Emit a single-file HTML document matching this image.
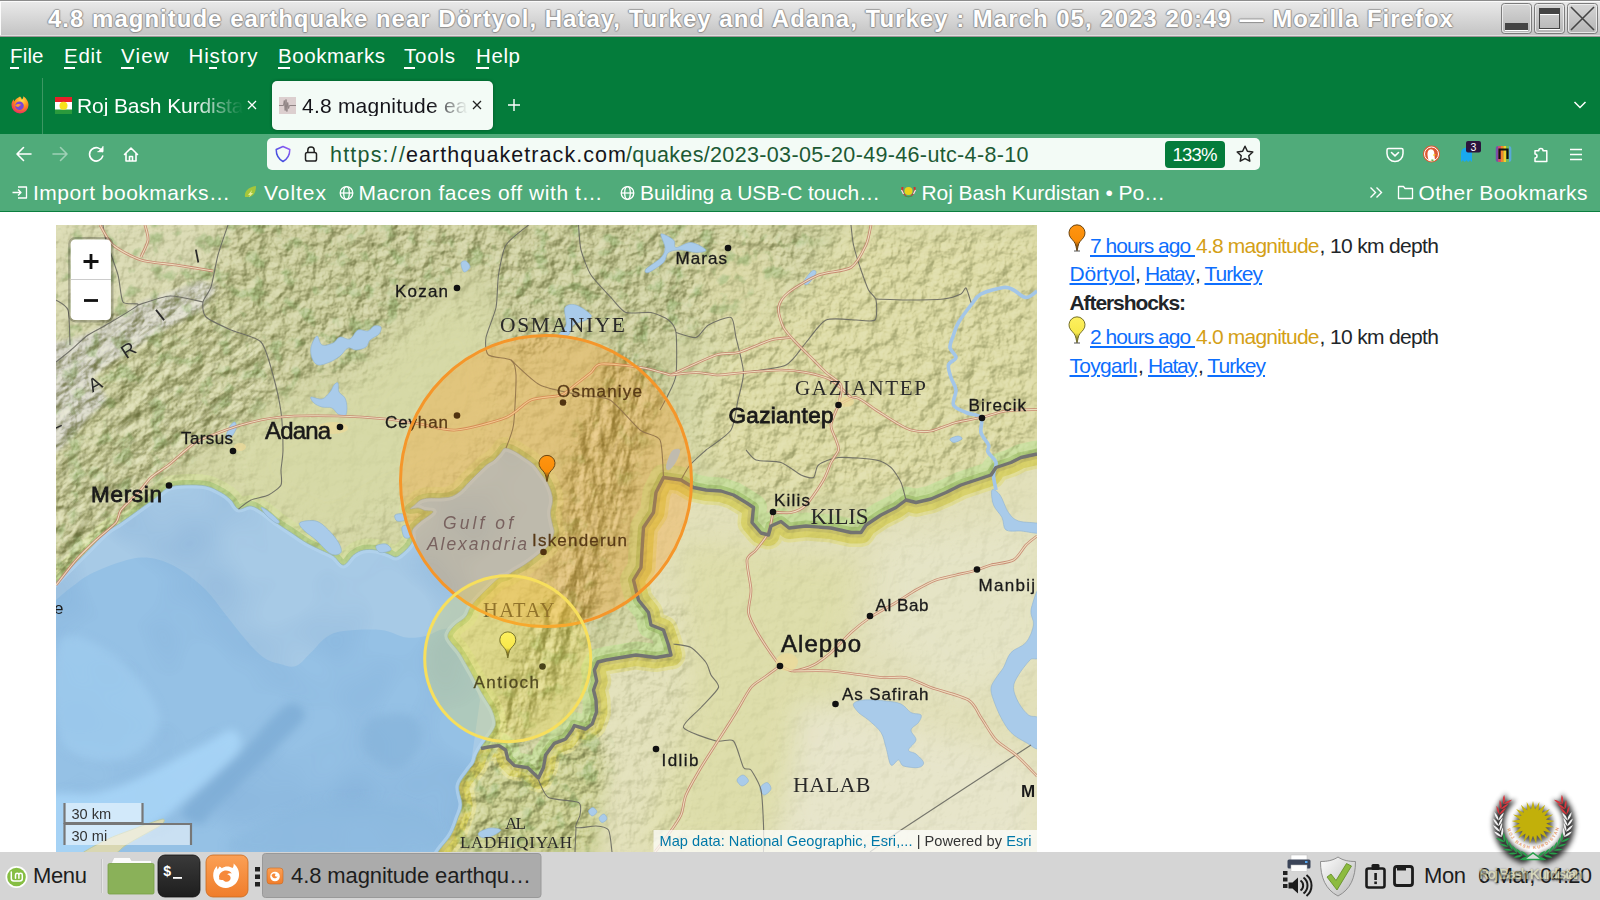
<!DOCTYPE html>
<html lang="en">
<head>
<meta charset="utf-8">
<title>4.8 magnitude earthquake near Dörtyol, Hatay, Turkey and Adana, Turkey : March 05, 2023 20:49 — Mozilla Firefox</title>
<style>
html,body{margin:0;padding:0;width:1600px;height:900px;overflow:hidden;background:#fff;font-family:"Liberation Sans",sans-serif;}
#root{position:absolute;left:0;top:0;width:1600px;height:900px;overflow:hidden;background:#fff;}
.a{position:absolute;}
.t{position:absolute;white-space:pre;line-height:1;}
a{color:inherit;}
</style>
</head>
<body>
<div id="root">
<!-- ===== window title bar ===== -->
<div class="a" style="left:0;top:0;width:1600px;height:37px;background:linear-gradient(#e9e9e9 2px,#c4c4c4 35px);"></div>
<div class="a" style="left:0;top:0;width:1600px;height:1px;background:#8c8c8c;"></div>
<div class="a" style="left:0;top:1px;width:1600px;height:1px;background:#fbfbfb;"></div>
<div class="a" style="left:0;top:1px;width:1px;height:35px;background:#fbfbfb;"></div>
<div class="a" style="left:0;top:35px;width:1600px;height:1px;background:#dedede;"></div>
<div class="a" style="left:0;top:36px;width:1600px;height:1px;background:#9c9696;"></div>
<svg class="a" style="left:1496px;top:0" width="104" height="37" viewBox="1496 0 104 37">
  <defs><linearGradient id="wb" x1="0" y1="0" x2="0" y2="1"><stop offset="0" stop-color="#d6d6d6"/><stop offset="1" stop-color="#b4b4b4"/></linearGradient></defs>
  <g fill="url(#wb)" stroke="#7c7c7c" stroke-width="1">
    <rect x="1501.5" y="3.5" width="30" height="30" rx="3"/>
    <rect x="1534.5" y="3.5" width="30" height="30" rx="3"/>
    <rect x="1567.5" y="3.5" width="30" height="30" rx="3"/>
  </g>
  <g fill="none" stroke="#f4f4f4" stroke-width="1" opacity=".8">
    <rect x="1502.5" y="4.5" width="28" height="28" rx="2.5"/>
    <rect x="1535.5" y="4.5" width="28" height="28" rx="2.5"/>
    <rect x="1568.5" y="4.5" width="28" height="28" rx="2.5"/>
  </g>
  <rect x="1505" y="23" width="23" height="7" fill="#444"/>
  <rect x="1505" y="30" width="23" height="1" fill="#fff"/>
  <rect x="1539.5" y="8.5" width="20" height="20" fill="none" stroke="#444"/>
  <rect x="1539" y="8" width="21" height="6" fill="#444"/>
  <rect x="1540" y="14" width="19" height="1" fill="#fff"/>
  <rect x="1539" y="29" width="21" height="1" fill="#fff"/>
  <path d="M1571 7 L1594 30 M1594 7 L1571 30" stroke="#444" stroke-width="1.6" fill="none"/>
</svg>

<!-- ===== menubar + tabs (dark green) ===== -->
<div class="a" style="left:0;top:37px;width:1600px;height:97px;background:#047c3b;"></div>
<!-- ===== nav + bookmarks (light green) ===== -->
<div class="a" style="left:0;top:134px;width:1600px;height:78px;background:#50ab7a;"></div>
<div class="a" style="left:0;top:211px;width:1600px;height:1px;background:#0b7f3f;"></div>
<!-- menu underlines (access keys) -->
<div class="a" style="left:10px;top:67px;width:9px;height:1.5px;background:#fff"></div>
<div class="a" style="left:64px;top:67px;width:11px;height:1.5px;background:#fff"></div>
<div class="a" style="left:121px;top:67px;width:13px;height:1.5px;background:#fff"></div>
<div class="a" style="left:208.500px;top:67px;width:8px;height:1.5px;background:#fff"></div>
<div class="a" style="left:278px;top:67px;width:12px;height:1.5px;background:#fff"></div>
<div class="a" style="left:404px;top:67px;width:11px;height:1.5px;background:#fff"></div>
<div class="a" style="left:476px;top:67px;width:13px;height:1.5px;background:#fff"></div>

<!-- firefox view icon + separator -->
<svg class="a" style="left:9px;top:94px" width="22" height="22" viewBox="0 0 22 22">
  <defs><radialGradient id="fx" cx=".6" cy=".25" r=".9"><stop offset="0" stop-color="#ffe24a"/><stop offset=".45" stop-color="#ff8a1c"/><stop offset=".8" stop-color="#f0355a"/><stop offset="1" stop-color="#b5288f"/></radialGradient></defs>
  <path d="M11 2.5c1.2 1.2 1.6 2 1.8 3 1.2-.6 1.6-1.900 1.500-3.200 2.800 1.800 5.200 5 5.200 8.700a8.500 8.500 0 1 1-17 0c0-2.400.9-4.400 2.300-5.800 0 1 .2 1.600.7 2.200.6-2 2.600-3.100 5.500-4.900z" fill="url(#fx)"/>
  <circle cx="10.500" cy="11.800" r="4.300" fill="#7a46d8"/>
  <path d="M6.200 11.500c1.500-1.800 4-2 6.300-.6-1.300.2-2.200.8-2.700 1.900-1.300.3-2.600-.1-3.600-1.300z" fill="#ff9a2e"/>
</svg>
<div class="a" style="left:42px;top:78px;width:1px;height:56px;background:#3c9763;"></div>

<!-- tab 1 favicon: flag -->
<svg class="a" style="left:55px;top:97px" width="17" height="17" viewBox="0 0 17 17">
  <rect width="17" height="17" fill="#fff"/><rect width="17" height="5" fill="#e8202a"/><rect y="12.500" width="17" height="4.500" fill="#2a9a3c"/>
  <circle cx="8.500" cy="8.700" r="4" fill="#f8e11a"/>
</svg>
<!-- tab close x (inactive) -->
<svg class="a" style="left:246px;top:99px" width="12" height="12" viewBox="0 0 12 12"><path d="M2 2l8 8M10 2l-8 8" stroke="#fff" stroke-width="1.300" fill="none"/></svg>

<!-- active tab -->
<div class="a" style="left:272px;top:81px;width:221px;height:49px;background:#f3fbf6;border-radius:5px;box-shadow:0 0 3px rgba(0,40,20,.5);"></div>
<svg class="a" style="left:279px;top:97px" width="17" height="17" viewBox="0 0 17 17">
  <rect width="17" height="17" fill="#dccfcf"/>
  <path d="M0 8.500h4.500M4.500 8.500l.8-5 .9 10 .8-11 .9 12 .8-9 .9 6 .8-3h6.600" stroke="#8f8484" stroke-width="1" fill="none"/>
</svg>
<svg class="a" style="left:470.500px;top:99px" width="12" height="12" viewBox="0 0 12 12"><path d="M2 2l8 8M10 2l-8 8" stroke="#222" stroke-width="1.300" fill="none"/></svg>
<!-- new tab + -->
<svg class="a" style="left:506px;top:97px" width="16" height="16" viewBox="0 0 16 16"><path d="M8 2v12M2 8h12" stroke="#fff" stroke-width="1.400" fill="none"/></svg>
<!-- tabs dropdown chevron -->
<svg class="a" style="left:1572px;top:97px" width="16" height="16" viewBox="0 0 16 16"><path d="M2.500 5l5.500 5.500L13.500 5" stroke="#fff" stroke-width="1.500" fill="none"/></svg>

<!-- nav buttons -->
<svg class="a" style="left:10px;top:140px" width="140" height="28" viewBox="10 140 140 28" fill="none" stroke="#fff" stroke-width="1.600" stroke-linecap="round" stroke-linejoin="round">
  <path d="M31 154H17.500M23.500 147.500L17 154l6.500 6.500"/>
  <g opacity=".45"><path d="M53 154h13.500M60.500 147.500L67 154l-6.500 6.500"/></g>
  <path d="M102.300 151.500a6.700 6.700 0 1 0 .4 4.600"/><path d="M103 146.500v5.200h-5.200" fill="#fff" stroke-width="1"/>
  <path d="M124.500 154.500L131 148l6.500 6.500M126 153.500v7.500h10v-7.500M129.500 161v-4.500h3v4.500"/>
</svg>

<!-- url bar -->
<div class="a" style="left:267px;top:138px;width:993px;height:32px;background:#f3fbf6;border-radius:5px;"></div>
<svg class="a" style="left:274px;top:144px" width="50" height="20" viewBox="274 144 50 20" fill="none">
  <defs><linearGradient id="sh" x1="0" y1="1" x2="1" y2="0"><stop offset="0" stop-color="#2a4bd8"/><stop offset="1" stop-color="#9a5cf5"/></linearGradient></defs>
  <path d="M283 146.500l6.800 3c0 5.500-2.300 9.500-6.800 12-4.500-2.500-6.800-6.500-6.800-12z" stroke="url(#sh)" stroke-width="1.500" stroke-linejoin="round"/>
  <rect x="305.500" y="152.500" width="11" height="8.500" rx="1.800" stroke="#222" stroke-width="1.500"/>
  <path d="M307.800 152.500v-2.300a3.200 3.200 0 0 1 6.400 0v2.300" stroke="#222" stroke-width="1.500"/>
</svg>
<div class="a" style="left:1165px;top:141px;width:60px;height:27px;background:#047c3b;border-radius:4px;"></div>
<svg class="a" style="left:1235px;top:144px" width="20" height="20" viewBox="0 0 20 20"><path d="M10 2.300l2.400 5 5.400.7-4 3.800 1 5.400-4.800-2.600-4.800 2.600 1-5.400-4-3.800 5.400-.7z" fill="none" stroke="#222" stroke-width="1.500" stroke-linejoin="round"/></svg>

<!-- right toolbar icons -->
<svg class="a" style="left:1380px;top:138px" width="212" height="34" viewBox="1380 138 212 34">
  <!-- pocket -->
  <path d="M1388.500 148.500h13a1.500 1.500 0 0 1 1.500 1.500v3.500a8 8 0 0 1-16 0V150a1.500 1.500 0 0 1 1.500-1.500z" fill="none" stroke="#fff" stroke-width="1.500"/>
  <path d="M1391.500 152.500l3.500 3.300 3.500-3.300" fill="none" stroke="#fff" stroke-width="1.600" stroke-linecap="round" stroke-linejoin="round"/>
  <!-- duckduckgo -->
  <circle cx="1431.500" cy="154" r="8.500" fill="#de5833"/><circle cx="1431.500" cy="154" r="7" fill="none" stroke="#fff" stroke-width="1"/>
  <path d="M1428.500 160c-1-4-1.800-8 .5-10 1.600-1.300 4.200-.6 5 1.500.6 1.800.2 3.500.6 5.500l.4 3c-2 .8-4.500.8-6.500 0z" fill="#fff"/>
  <path d="M1433 154.500h3.500l-3 1.600z" fill="#fdd20a"/><path d="M1431.500 159.200l2.200.5-.4 1.500h-1.800z" fill="#65bc46"/>
  <!-- ghostery -->
  <path d="M1461 162v-9a5.500 5.500 0 0 1 11 0v9l-1.900-1.700-1.800 1.700-1.800-1.700-1.800 1.700-1.800-1.700z" fill="#19a8ee"/>
  <rect x="1466" y="141" width="15" height="11.500" rx="2" fill="#2b143d"/>
  <text x="1473.500" y="150.800" font-family="Liberation Sans, sans-serif" font-size="10.500" fill="#fff" text-anchor="middle">3</text>
  <!-- rainbow n -->
  <clipPath id="rn"><rect x="1495.500" y="146" width="16" height="16" rx="3"/></clipPath>
  <g clip-path="url(#rn)"><rect x="1495.500" y="146" width="2.700" height="16" fill="#7b4fa8"/><rect x="1498.200" y="146" width="2.700" height="16" fill="#d6476c"/><rect x="1500.900" y="146" width="2.700" height="16" fill="#f0852a"/><rect x="1503.600" y="146" width="2.700" height="16" fill="#f2d02c"/><rect x="1506.300" y="146" width="2.700" height="16" fill="#6dbb5a"/><rect x="1509" y="146" width="2.700" height="16" fill="#59a9d8"/></g>
  <path d="M1499.500 159v-9.500h8V159" fill="none" stroke="#111" stroke-width="2.200"/>
  <!-- puzzle -->
  <path d="M1535 161.500v-3.400a2 2 0 1 0 0-4v-3.400h3.800a2.100 2.100 0 1 1 4.200 0h3.800v10.800z" fill="none" stroke="#fff" stroke-width="1.500" stroke-linejoin="round"/>
  <!-- hamburger -->
  <path d="M1570 149.500h12M1570 154.500h12M1570 159.500h12" stroke="#fff" stroke-width="1.500"/>
</svg>

<!-- bookmarks bar icons -->
<svg class="a" style="left:8px;top:180px" width="1420" height="26" viewBox="8 180 1420 26" fill="none" stroke="#fff" stroke-width="1.300">
  <path d="M18 187h8.500v11H18M12.500 192.500h8.500M18 189.500l3 3-3 3" stroke-linejoin="round"/>
  <path d="M245 197c-1-5 3-10 11-11 0 7-3 11-8 11-1 0-2 0-3 0z" fill="#a5c63b" stroke="none"/><path d="M248 195l4-5-1 3h2l-4 4.500 1-2.500z" fill="#e6ef9a" stroke="none"/>
  <circle cx="346.500" cy="193" r="6.300"/><ellipse cx="346.500" cy="193" rx="2.800" ry="6.300"/><path d="M340.200 193h12.600"/>
  <circle cx="627.500" cy="193" r="6.300"/><ellipse cx="627.500" cy="193" rx="2.800" ry="6.300"/><path d="M621.200 193h12.600"/>
  <g stroke="none"><circle cx="908.500" cy="191" r="4" fill="#e9d419"/><path d="M901.500 187c-1 5 2 9 7 10-4-2-6-5-5-10z" fill="#c33"/><path d="M915.500 187c1 5-2 9-7 10 4-2 6-5 5-10z" fill="#c33"/><path d="M903 195c2 2 9 2 11 0-3 3-8 3-11 0z" fill="#2a8f3a"/><path d="M901.500 190l2 4M915.500 190l-2 4" stroke="#eee" stroke-width="1.200"/></g>
  <path d="M1370.500 187.500l5 5-5 5M1376.500 187.500l5 5-5 5" stroke-width="1.400"/>
  <path d="M1398.500 186.500h5l1.500 2h7.500v10h-14z" stroke-linejoin="round"/>
</svg>

<!-- ===== taskbar ===== -->
<div class="a" style="left:0;top:852px;width:1600px;height:48px;background:#d5d5d5;"></div>
<svg class="a" style="left:0;top:852px" width="560" height="48" viewBox="0 852 560 48">
  <defs>
    <linearGradient id="tfx" x1="0" y1="0" x2="0" y2="1"><stop offset="0" stop-color="#fba055"/><stop offset="1" stop-color="#f07d2b"/></linearGradient>
    <linearGradient id="ttm" x1="0" y1="0" x2="0" y2="1"><stop offset="0" stop-color="#3a3a3a"/><stop offset="1" stop-color="#1e1e1e"/></linearGradient>
  </defs>
  <!-- mint logo -->
  <circle cx="16.500" cy="877" r="11" fill="#fff"/><circle cx="16.500" cy="877" r="9.300" fill="#86be43"/>
  <path transform="translate(-3.500 0)" d="M14.800 872v6.500a2.500 2.500 0 0 0 2.500 2.500h6a2.500 2.500 0 0 0 2.500-2.500V875a1.700 1.700 0 0 0-3.400 0v3.200M22.400 875a1.700 1.700 0 0 0-3.400 0v3.200" fill="none" stroke="#fff" stroke-width="1.500" stroke-linecap="round"/>
  <rect x="101" y="859" width="1" height="34" fill="#c4c4c4"/><rect x="102" y="859" width="1" height="34" fill="#e4e4e4"/>
  <!-- folder -->
  <path d="M111 864l3-6.500h16l1.500 3h20v5z" fill="#fbfbfb" stroke="#c9c9c9" stroke-width=".6"/>
  <rect x="108" y="863.500" width="46" height="30.500" rx="1.500" fill="#8ab159" stroke="#76a045" stroke-width=".8"/>
  <!-- terminal -->
  <rect x="158" y="855" width="42" height="42" rx="7" fill="url(#ttm)" stroke="#111" stroke-width=".8"/>
  <text x="163" y="876" font-family="Liberation Mono, monospace" font-weight="700" font-size="14" fill="#fff">$</text><rect x="173" y="877" width="9" height="1.800" fill="#fff"/>
  <!-- firefox launcher -->
  <rect x="206" y="855" width="42" height="42" rx="7" fill="url(#tfx)" stroke="#c96a20" stroke-width=".8"/>
  <path d="M219.500 866.500c1 .3 1.800 1 2.300 1.800 3-2.300 7.500-2.600 10.800-.2 1-1.500 1.200-3 1-4.500 4.500 3.500 6.500 9 5 14.500-1.500 6-7 10-13 9.800-6.500-.2-12-5.300-12.400-12-.2-4 1.300-7.300 3.800-9.800 0 1.500.2 2.500.8 3.500.4-1.200 1-2.300 1.700-3.100z" fill="#fff"/>
  <path d="M219 876.500c.5-3.500 3.500-6 7-6 2.500 0 4.600 1.200 5.900 3-1.800-.6-3.600-.2-4.800.8 2 .3 3.300 1.700 3.500 3.400.2 2.200-1.700 4-4 4-1.500 0-2.800-.7-3.500-1.800-1.500.4-3 .2-4.100-.6.400-1 .3-2 0-2.800z" fill="#f6893a"/>
  <!-- grip dots -->
  <rect x="255" y="867" width="5" height="4.500" fill="#222"/><rect x="255" y="874.500" width="5" height="4.500" fill="#222"/><rect x="255" y="882" width="5" height="4.500" fill="#222"/>
  <!-- window button -->
  <rect x="262.500" y="853.500" width="278.500" height="44" rx="3" fill="#ababab" stroke="#999" stroke-width="1"/>
  <rect x="267" y="868" width="16" height="16" rx="3" fill="url(#tfx)" stroke="#c96a20" stroke-width=".6"/><circle cx="275" cy="876.500" r="4.800" fill="#fff"/><path d="M271.500 875c1-1.500 3-2 4.500-1-1 .4-1.200 1.200-.8 2 .5.800 1.600.8 2.300.2-.4 1.600-2 2.400-3.500 2-1.300-.4-2.200-1.700-2.500-3.200z" fill="#f6893a"/>
</svg>

<!-- tray -->
<svg class="a" style="left:1275px;top:852px" width="150" height="48" viewBox="1275 852 150 48">
  <rect x="1283" y="871" width="4.500" height="4" fill="#222"/><rect x="1283" y="877.500" width="4.500" height="4" fill="#222"/><rect x="1283" y="884" width="4.500" height="4" fill="#222"/>
  <!-- printer -->
  <rect x="1291" y="855" width="16" height="6" fill="#fff" stroke="#bbb" stroke-width=".5"/>
  <rect x="1287.500" y="859.500" width="23" height="9" rx="1.500" fill="#3b4458"/>
  <rect x="1291" y="865" width="16" height="6.500" fill="#fdfdfd" stroke="#bbb" stroke-width=".5"/><rect x="1305" y="861" width="2.500" height="2" fill="#55a7f0"/>
  <!-- speaker -->
  <path d="M1288.500 882.500h4l5.500-5v16l-5.500-5h-4z" fill="#1c1c1c"/>
  <path d="M1300.500 880.500a6 6 0 0 1 0 10M1303.500 877.500a10 10 0 0 1 0 16M1306.500 875a13.500 13.500 0 0 1 0 21" fill="none" stroke="#1c1c1c" stroke-width="2"/>
  <!-- shield -->
  <defs><linearGradient id="shd" x1="0" y1="0" x2="1" y2="1"><stop offset="0" stop-color="#fdfdfd"/><stop offset="1" stop-color="#b9b9b9"/></linearGradient></defs>
  <path d="M1338 857c5 3.500 11 4.500 17.500 4.500 0 16-5 28-17.500 34.500-12.500-6.500-17.500-18.500-17.500-34.500 6.500 0 12.500-1 17.500-4.500z" fill="url(#shd)" stroke="#8e8e8e" stroke-width="1"/>
  <path d="M1327 877l4-3 5 6.500 10.500-17 5 2.500-14.500 24z" fill="#8dbb3f" stroke="#5e8a22" stroke-width=".8"/>
  <!-- clipboard -->
  <rect x="1366.500" y="868.500" width="18" height="19" rx="2" fill="none" stroke="#1c1c1c" stroke-width="2.600"/><rect x="1371.500" y="864" width="8" height="6" rx="1.500" fill="#1c1c1c"/>
  <rect x="1374.300" y="873" width="2.600" height="7" fill="#1c1c1c"/><rect x="1374.300" y="881.500" width="2.600" height="2.600" fill="#1c1c1c"/>
  <!-- network square -->
  <rect x="1394.500" y="866.500" width="18" height="19" rx="2.500" fill="none" stroke="#1c1c1c" stroke-width="2.800"/><rect x="1397" y="866" width="9" height="4.500" fill="#1c1c1c"/>
</svg>

<!-- emblem watermark -->
<svg class="a" style="left:1476px;top:782px" width="116" height="104" viewBox="1476 782 116 104">
<defs><filter id="ebl" x="-20%" y="-20%" width="140%" height="140%"><feGaussianBlur stdDeviation="2.400"/></filter>
<path id="earc" d="M1506.9,827.1 A26.500,26.500 0 0 0 1559.1,827.1"/></defs>
<g filter="url(#ebl)" opacity=".8" transform="translate(1 2)"><path d="M1499.4,814.7Q1500.1,810.0 1496.6,805.7Q1496.1,811.3 1499.4,814.7ZM1499.4,814.7Q1503.8,813.0 1505.9,807.8Q1500.8,810.2 1499.4,814.7ZM1501.1,809.3Q1502.6,804.8 1499.9,799.9Q1498.5,805.3 1501.1,809.3ZM1501.1,809.3Q1505.8,808.3 1508.7,803.5Q1503.3,805.0 1501.1,809.3ZM1503.7,804.2Q1506.0,800.0 1504.1,794.7Q1501.8,799.9 1503.7,804.2ZM1503.7,804.2Q1508.5,804.0 1512.1,799.8Q1506.5,800.4 1503.7,804.2ZM1566.6,814.7Q1565.2,810.2 1560.1,807.8Q1562.2,813.0 1566.6,814.7ZM1566.6,814.7Q1569.9,811.3 1569.4,805.7Q1565.9,810.0 1566.6,814.7ZM1564.9,809.3Q1562.7,805.0 1557.3,803.5Q1560.2,808.3 1564.9,809.3ZM1564.9,809.3Q1567.5,805.3 1566.1,799.9Q1563.4,804.8 1564.9,809.3ZM1562.3,804.2Q1559.5,800.4 1553.9,799.8Q1557.5,804.0 1562.3,804.2ZM1562.3,804.2Q1564.2,799.9 1561.9,794.7Q1560.0,800.0 1562.3,804.2ZM1501.7,837.1Q1499.4,832.9 1494.0,831.6Q1497.0,836.3 1501.7,837.1ZM1501.7,837.1Q1504.2,833.0 1502.6,827.6Q1500.0,832.6 1501.7,837.1ZM1499.8,831.7Q1498.2,827.2 1493.0,825.1Q1495.2,830.2 1499.8,831.7ZM1499.8,831.7Q1502.8,828.1 1502.1,822.5Q1498.8,827.1 1499.8,831.7ZM1498.7,826.1Q1497.9,821.4 1493.1,818.4Q1494.5,823.9 1498.7,826.1ZM1498.7,826.1Q1502.3,823.0 1502.6,817.4Q1498.5,821.4 1498.7,826.1ZM1498.6,820.4Q1498.5,815.6 1494.3,811.9Q1494.8,817.5 1498.6,820.4ZM1498.6,820.4Q1502.7,818.0 1503.8,812.5Q1499.2,815.7 1498.6,820.4ZM1564.3,837.1Q1566.0,832.6 1563.4,827.6Q1561.8,833.0 1564.3,837.1ZM1564.3,837.1Q1569.0,836.3 1572.0,831.6Q1566.6,832.9 1564.3,837.1ZM1566.2,831.7Q1567.2,827.1 1563.9,822.5Q1563.2,828.1 1566.2,831.7ZM1566.2,831.7Q1570.8,830.2 1573.0,825.1Q1567.8,827.2 1566.2,831.7ZM1567.3,826.1Q1567.5,821.4 1563.4,817.4Q1563.7,823.0 1567.3,826.1ZM1567.3,826.1Q1571.5,823.9 1572.9,818.4Q1568.1,821.4 1567.3,826.1ZM1567.4,820.4Q1566.8,815.7 1562.2,812.5Q1563.3,818.0 1567.4,820.4ZM1567.4,820.4Q1571.2,817.5 1571.7,811.9Q1567.5,815.6 1567.4,820.4ZM1528.2,856.7Q1523.5,856.3 1519.4,860.2Q1525.0,860.2 1528.2,856.7ZM1528.2,856.7Q1526.1,852.4 1520.7,850.8Q1523.5,855.7 1528.2,856.7ZM1522.6,855.4Q1518.0,854.3 1513.4,857.5Q1518.9,858.4 1522.6,855.4ZM1522.6,855.4Q1521.3,850.8 1516.2,848.4Q1518.2,853.7 1522.6,855.4ZM1517.3,853.2Q1513.0,851.4 1507.9,853.7Q1513.2,855.5 1517.3,853.2ZM1517.3,853.2Q1516.8,848.5 1512.2,845.3Q1513.3,850.8 1517.3,853.2ZM1512.5,850.2Q1508.5,847.7 1503.0,849.2Q1508.0,851.8 1512.5,850.2ZM1512.5,850.2Q1512.7,845.5 1508.7,841.5Q1508.9,847.1 1512.5,850.2ZM1508.2,846.5Q1504.6,843.3 1499.1,843.8Q1503.5,847.3 1508.2,846.5ZM1508.2,846.5Q1509.2,841.8 1505.9,837.2Q1505.1,842.8 1508.2,846.5ZM1504.6,842.0Q1501.6,838.3 1496.0,838.0Q1499.8,842.1 1504.6,842.0ZM1504.6,842.0Q1506.3,837.6 1503.8,832.6Q1502.2,837.9 1504.6,842.0ZM1537.8,856.7Q1542.5,855.7 1545.3,850.8Q1539.9,852.4 1537.8,856.7ZM1537.8,856.7Q1541.0,860.2 1546.6,860.2Q1542.5,856.3 1537.8,856.7ZM1543.4,855.4Q1547.8,853.7 1549.8,848.4Q1544.7,850.8 1543.4,855.4ZM1543.4,855.4Q1547.1,858.4 1552.6,857.5Q1548.0,854.3 1543.4,855.4ZM1548.7,853.2Q1552.7,850.8 1553.8,845.3Q1549.2,848.5 1548.7,853.2ZM1548.7,853.2Q1552.8,855.5 1558.1,853.7Q1553.0,851.4 1548.7,853.2ZM1553.5,850.2Q1557.1,847.1 1557.3,841.5Q1553.3,845.5 1553.5,850.2ZM1553.5,850.2Q1558.0,851.8 1563.0,849.2Q1557.5,847.7 1553.5,850.2ZM1557.8,846.5Q1560.9,842.8 1560.1,837.2Q1556.8,841.8 1557.8,846.5ZM1557.8,846.5Q1562.5,847.3 1566.9,843.8Q1561.4,843.3 1557.8,846.5ZM1561.4,842.0Q1563.8,837.9 1562.2,832.6Q1559.7,837.6 1561.4,842.0ZM1561.4,842.0Q1566.2,842.1 1570.0,838.0Q1564.4,838.3 1561.4,842.0Z" fill="#000" stroke="#000" stroke-width="2.500"/><circle cx="1533" cy="822.5" r="19" fill="#000" opacity=".8"/></g>
<path d="M1499.4,814.7Q1500.1,810.0 1496.6,805.7Q1496.1,811.3 1499.4,814.7ZM1499.4,814.7Q1503.8,813.0 1505.9,807.8Q1500.8,810.2 1499.4,814.7ZM1501.1,809.3Q1502.6,804.8 1499.9,799.9Q1498.5,805.3 1501.1,809.3ZM1501.1,809.3Q1505.8,808.3 1508.7,803.5Q1503.3,805.0 1501.1,809.3ZM1503.7,804.2Q1506.0,800.0 1504.1,794.7Q1501.8,799.9 1503.7,804.2ZM1503.7,804.2Q1508.5,804.0 1512.1,799.8Q1506.5,800.4 1503.7,804.2ZM1566.6,814.7Q1565.2,810.2 1560.1,807.8Q1562.2,813.0 1566.6,814.7ZM1566.6,814.7Q1569.9,811.3 1569.4,805.7Q1565.9,810.0 1566.6,814.7ZM1564.9,809.3Q1562.7,805.0 1557.3,803.5Q1560.2,808.3 1564.9,809.3ZM1564.9,809.3Q1567.5,805.3 1566.1,799.9Q1563.4,804.8 1564.9,809.3ZM1562.3,804.2Q1559.5,800.4 1553.9,799.8Q1557.5,804.0 1562.3,804.2ZM1562.3,804.2Q1564.2,799.9 1561.9,794.7Q1560.0,800.0 1562.3,804.2Z" fill="#d9363e"/>
<path d="M1501.7,837.1Q1499.4,832.9 1494.0,831.6Q1497.0,836.3 1501.7,837.1ZM1501.7,837.1Q1504.2,833.0 1502.6,827.6Q1500.0,832.6 1501.7,837.1ZM1499.8,831.7Q1498.2,827.2 1493.0,825.1Q1495.2,830.2 1499.8,831.7ZM1499.8,831.7Q1502.8,828.1 1502.1,822.5Q1498.8,827.1 1499.8,831.7ZM1498.7,826.1Q1497.9,821.4 1493.1,818.4Q1494.5,823.9 1498.7,826.1ZM1498.7,826.1Q1502.3,823.0 1502.6,817.4Q1498.5,821.4 1498.7,826.1ZM1498.6,820.4Q1498.5,815.6 1494.3,811.9Q1494.8,817.5 1498.6,820.4ZM1498.6,820.4Q1502.7,818.0 1503.8,812.5Q1499.2,815.7 1498.6,820.4ZM1564.3,837.1Q1566.0,832.6 1563.4,827.6Q1561.8,833.0 1564.3,837.1ZM1564.3,837.1Q1569.0,836.3 1572.0,831.6Q1566.6,832.9 1564.3,837.1ZM1566.2,831.7Q1567.2,827.1 1563.9,822.5Q1563.2,828.1 1566.2,831.7ZM1566.2,831.7Q1570.8,830.2 1573.0,825.1Q1567.8,827.2 1566.2,831.7ZM1567.3,826.1Q1567.5,821.4 1563.4,817.4Q1563.7,823.0 1567.3,826.1ZM1567.3,826.1Q1571.5,823.9 1572.9,818.4Q1568.1,821.4 1567.3,826.1ZM1567.4,820.4Q1566.8,815.7 1562.2,812.5Q1563.3,818.0 1567.4,820.4ZM1567.4,820.4Q1571.2,817.5 1571.7,811.9Q1567.5,815.6 1567.4,820.4Z" fill="#f2f2f2"/>
<path d="M1528.2,856.7Q1523.5,856.3 1519.4,860.2Q1525.0,860.2 1528.2,856.7ZM1528.2,856.7Q1526.1,852.4 1520.7,850.8Q1523.5,855.7 1528.2,856.7ZM1522.6,855.4Q1518.0,854.3 1513.4,857.5Q1518.9,858.4 1522.6,855.4ZM1522.6,855.4Q1521.3,850.8 1516.2,848.4Q1518.2,853.7 1522.6,855.4ZM1517.3,853.2Q1513.0,851.4 1507.9,853.7Q1513.2,855.5 1517.3,853.2ZM1517.3,853.2Q1516.8,848.5 1512.2,845.3Q1513.3,850.8 1517.3,853.2ZM1512.5,850.2Q1508.5,847.7 1503.0,849.2Q1508.0,851.8 1512.5,850.2ZM1512.5,850.2Q1512.7,845.5 1508.7,841.5Q1508.9,847.1 1512.5,850.2ZM1508.2,846.5Q1504.6,843.3 1499.1,843.8Q1503.5,847.3 1508.2,846.5ZM1508.2,846.5Q1509.2,841.8 1505.9,837.2Q1505.1,842.8 1508.2,846.5ZM1504.6,842.0Q1501.6,838.3 1496.0,838.0Q1499.8,842.1 1504.6,842.0ZM1504.6,842.0Q1506.3,837.6 1503.8,832.6Q1502.2,837.9 1504.6,842.0ZM1537.8,856.7Q1542.5,855.7 1545.3,850.8Q1539.9,852.4 1537.8,856.7ZM1537.8,856.7Q1541.0,860.2 1546.6,860.2Q1542.5,856.3 1537.8,856.7ZM1543.4,855.4Q1547.8,853.7 1549.8,848.4Q1544.7,850.8 1543.4,855.4ZM1543.4,855.4Q1547.1,858.4 1552.6,857.5Q1548.0,854.3 1543.4,855.4ZM1548.7,853.2Q1552.7,850.8 1553.8,845.3Q1549.2,848.5 1548.7,853.2ZM1548.7,853.2Q1552.8,855.5 1558.1,853.7Q1553.0,851.4 1548.7,853.2ZM1553.5,850.2Q1557.1,847.1 1557.3,841.5Q1553.3,845.5 1553.5,850.2ZM1553.5,850.2Q1558.0,851.8 1563.0,849.2Q1557.5,847.7 1553.5,850.2ZM1557.8,846.5Q1560.9,842.8 1560.1,837.2Q1556.8,841.8 1557.8,846.5ZM1557.8,846.5Q1562.5,847.3 1566.9,843.8Q1561.4,843.3 1557.8,846.5ZM1561.4,842.0Q1563.8,837.9 1562.2,832.6Q1559.7,837.6 1561.4,842.0ZM1561.4,842.0Q1566.2,842.1 1570.0,838.0Q1564.4,838.3 1561.4,842.0Z" fill="#27a04a"/>
<path d="M1533.0,801.0 L1535.0,809.4 L1539.3,802.0 L1538.7,810.6 L1545.1,804.7 L1542.0,812.8 L1549.8,809.1 L1544.4,815.9 L1553.0,814.6 L1545.9,819.6 L1554.4,820.9 L1546.2,823.5 L1554.0,827.3 L1545.3,827.3 L1551.6,833.2 L1543.3,830.7 L1547.6,838.3 L1540.4,833.4 L1542.3,841.9 L1536.9,835.1 L1536.2,843.8 L1533.0,835.7 L1529.8,843.8 L1529.1,835.1 L1523.7,841.9 L1525.6,833.4 L1518.4,838.3 L1522.7,830.7 L1514.4,833.2 L1520.7,827.3 L1512.0,827.3 L1519.8,823.5 L1511.6,820.9 L1520.1,819.6 L1513.0,814.6 L1521.6,815.9 L1516.2,809.1 L1524.0,812.8 L1520.9,804.7 L1527.3,810.6 L1526.7,802.0 L1531.0,809.4Z" fill="#c2b00a"/>
<text font-family="Liberation Sans, sans-serif" font-size="4.400" font-weight="700" fill="#e39a6a" letter-spacing="1.250"><textPath href="#earc" startOffset="2">ROJ BASH KURDISTAN</textPath></text>
<path d="M1524,859.500l9,-6.500l9,6.500z" fill="#dcdcdc" stroke="#27a04a" stroke-width="1.500"/>
</svg>

<!-- content pins -->
<svg class="a" style="left:1066px;top:222px" width="24" height="126" viewBox="1066 222 24 126">
  <defs>
    <linearGradient id="pgO" x1="0" y1="0" x2="0" y2="1"><stop offset="0" stop-color="#ff9510"/><stop offset=".62" stop-color="#f98c08"/><stop offset=".9" stop-color="#6b3d08"/><stop offset="1" stop-color="#1a1208"/></linearGradient>
    <linearGradient id="pgY" x1="0" y1="0" x2="0" y2="1"><stop offset="0" stop-color="#fdf060"/><stop offset=".62" stop-color="#f7e84a"/><stop offset=".9" stop-color="#6d6a20"/><stop offset="1" stop-color="#1a1a08"/></linearGradient>
  </defs>
  <g transform="translate(1077 251)"><path d="M0,0 L-1,-4.500 C-1.500,-8.500 -4,-10.500 -6.300,-13.200 A8,8 0 1 1 6.300,-13.200 C4,-10.500 1.500,-8.500 1,-4.500 Z" fill="url(#pgO)" stroke="#6a4512" stroke-width="1"/><path d="M-3,0H3" stroke="#555" stroke-width="1"/></g>
  <g transform="translate(1077 343)"><path d="M0,0 L-1,-4.500 C-1.500,-8.500 -4,-10.500 -6.300,-13.200 A8,8 0 1 1 6.300,-13.200 C4,-10.500 1.500,-8.500 1,-4.500 Z" fill="url(#pgY)" stroke="#75702a" stroke-width="1"/><path d="M-3,0H3" stroke="#555" stroke-width="1"/></g>
</svg>
<svg class="a" style="left:56px;top:225px" width="981" height="627" viewBox="56 225 981 627">
<defs>
<clipPath id="cm"><rect x="56" y="225" width="981" height="627"/></clipPath>
<clipPath id="cTR"><path d="M481.0,748.5 L488.5,747.0 L499.0,745.6 L505.6,750.0 L507.8,759.0 L514.4,765.6 L527.8,767.8 L538.5,778.0 L543.5,767.5 L545.6,755.0 L554.4,743.3 L565.6,739.0 L572.2,730.0 L574.4,725.6 L585.6,729.0 L592.2,724.0 L596.5,712.0 L596.0,700.0 L593.5,690.0 L596.7,681.0 L594.4,670.0 L598.0,662.0 L606.0,660.0 L621.0,657.5 L636.0,655.0 L656.0,657.5 L671.0,655.0 L668.5,645.0 L663.5,630.0 L651.0,625.0 L648.5,612.5 L638.5,600.0 L633.5,580.0 L641.0,567.5 L642.0,550.0 L643.5,527.5 L653.5,512.5 L656.0,492.5 L663.5,477.5 L681.0,480.0 L693.5,487.5 L706.0,490.0 L721.0,491.0 L733.5,495.0 L746.0,502.5 L753.5,507.5 L752.0,522.5 L761.0,533.0 L768.5,535.0 L771.0,526.0 L781.0,521.5 L789.0,528.0 L806.0,526.0 L831.0,528.0 L851.0,532.5 L861.0,532.5 L866.0,525.0 L881.0,515.0 L896.0,507.5 L906.0,500.0 L916.0,502.5 L931.0,499.0 L946.0,492.5 L961.0,485.0 L976.0,480.0 L991.0,475.0 L996.0,467.5 L1011.0,462.5 L1021.0,457.5 L1037.0,454.0 L1037.0,225.0 L56.0,225.0 L56.0,760.0 L470.0,760.0Z"/></clipPath>
<clipPath id="cSY"><path d="M481.0,748.5 L488.5,747.0 L499.0,745.6 L505.6,750.0 L507.8,759.0 L514.4,765.6 L527.8,767.8 L538.5,778.0 L543.5,767.5 L545.6,755.0 L554.4,743.3 L565.6,739.0 L572.2,730.0 L574.4,725.6 L585.6,729.0 L592.2,724.0 L596.5,712.0 L596.0,700.0 L593.5,690.0 L596.7,681.0 L594.4,670.0 L598.0,662.0 L606.0,660.0 L621.0,657.5 L636.0,655.0 L656.0,657.5 L671.0,655.0 L668.5,645.0 L663.5,630.0 L651.0,625.0 L648.5,612.5 L638.5,600.0 L633.5,580.0 L641.0,567.5 L642.0,550.0 L643.5,527.5 L653.5,512.5 L656.0,492.5 L663.5,477.5 L681.0,480.0 L693.5,487.5 L706.0,490.0 L721.0,491.0 L733.5,495.0 L746.0,502.5 L753.5,507.5 L752.0,522.5 L761.0,533.0 L768.5,535.0 L771.0,526.0 L781.0,521.5 L789.0,528.0 L806.0,526.0 L831.0,528.0 L851.0,532.5 L861.0,532.5 L866.0,525.0 L881.0,515.0 L896.0,507.5 L906.0,500.0 L916.0,502.5 L931.0,499.0 L946.0,492.5 L961.0,485.0 L976.0,480.0 L991.0,475.0 L996.0,467.5 L1011.0,462.5 L1021.0,457.5 L1037.0,454.0 L1037.0,852.0 L430.0,852.0 L470.0,760.0Z"/></clipPath>
<clipPath id="cSea"><path d="M30.0,612.0 C32.3,609.3 39.7,600.9 44.0,596.0 C48.3,591.1 51.5,587.2 56.0,582.5 C60.5,577.8 65.6,572.9 71.0,567.5 C76.4,562.1 82.7,555.8 88.5,550.0 C94.3,544.2 100.6,537.1 106.0,532.5 C111.4,527.9 115.6,526.2 121.0,522.5 C126.4,518.8 132.7,514.2 138.5,510.0 C144.3,505.8 151.0,501.2 156.0,497.5 C161.0,493.8 163.5,489.6 168.5,487.5 C173.5,485.4 179.8,485.2 186.0,485.0 C192.2,484.8 200.2,484.8 206.0,486.0 C211.8,487.2 216.8,490.2 221.0,492.5 C225.2,494.8 228.1,497.2 231.0,500.0 C233.9,502.8 235.2,508.0 238.5,509.0 C241.8,510.0 246.8,505.4 251.0,506.0 C255.2,506.6 259.3,509.8 263.5,512.5 C267.7,515.2 271.4,519.2 276.0,522.5 C280.6,525.8 286.0,529.2 291.0,532.5 C296.0,535.8 301.0,539.6 306.0,542.5 C311.0,545.4 316.4,547.8 321.0,550.0 C325.6,552.2 329.8,553.5 333.5,556.0 C337.2,558.5 340.2,565.2 343.5,565.0 C346.8,564.8 350.2,557.5 353.5,555.0 C356.8,552.5 359.8,550.8 363.5,550.0 C367.2,549.2 371.8,549.3 376.0,550.0 C380.2,550.7 385.2,552.8 388.5,554.0 C391.8,555.2 393.7,557.2 396.0,557.0 C398.3,556.8 400.3,554.8 402.5,553.0 C404.7,551.2 407.3,548.7 409.0,546.5 C410.7,544.3 412.0,542.6 412.5,540.0 C413.0,537.4 411.4,533.4 412.0,531.0 C412.6,528.6 414.2,527.3 416.0,525.5 C417.8,523.7 420.3,521.7 422.5,520.0 C424.7,518.3 427.2,516.9 429.0,515.5 C430.8,514.1 433.7,512.3 433.0,511.5 C432.3,510.7 427.5,511.1 425.0,510.5 C422.5,509.9 420.5,508.2 418.0,508.0 C415.5,507.8 410.7,509.4 410.0,509.0 C409.3,508.6 412.2,507.0 414.0,505.5 C415.8,504.0 418.0,501.2 420.5,500.0 C423.0,498.8 425.7,498.3 429.0,498.0 C432.3,497.7 436.8,498.2 440.5,498.0 C444.2,497.8 448.2,497.7 451.5,496.5 C454.8,495.3 457.6,493.4 460.5,491.0 C463.4,488.6 466.1,485.0 469.0,482.0 C471.9,479.0 475.0,475.9 478.0,473.0 C481.0,470.1 484.3,466.7 487.0,464.5 C489.7,462.3 491.8,461.9 494.0,460.0 C496.2,458.1 498.7,455.0 500.5,453.0 C502.3,451.0 502.8,448.3 505.0,448.0 C507.2,447.7 510.7,449.3 514.0,451.0 C517.3,452.7 521.7,455.8 525.0,458.0 C528.3,460.2 531.4,462.0 534.0,464.5 C536.6,467.0 538.3,470.1 540.5,473.0 C542.7,475.9 545.2,478.7 547.0,482.0 C548.8,485.3 550.6,489.7 551.5,493.0 C552.4,496.3 552.7,498.7 552.5,502.0 C552.3,505.3 550.5,509.2 550.5,513.0 C550.5,516.8 551.9,521.2 552.5,524.5 C553.1,527.8 554.6,529.7 554.0,533.0 C553.4,536.3 550.9,541.5 549.0,544.5 C547.1,547.5 545.0,548.8 542.5,551.0 C540.0,553.2 536.9,555.8 534.0,558.0 C531.1,560.2 528.3,562.3 525.0,564.5 C521.7,566.7 517.0,569.2 514.0,571.0 C511.0,572.8 509.5,574.3 507.0,575.5 C504.5,576.7 502.2,575.9 499.0,578.0 C495.8,580.1 491.7,584.5 488.0,588.0 C484.3,591.5 480.0,595.7 477.0,599.0 C474.0,602.3 471.9,605.0 470.0,608.0 C468.1,611.0 468.1,614.1 465.5,617.0 C462.9,619.9 457.4,622.6 454.5,625.5 C451.6,628.4 448.8,631.9 448.0,634.5 C447.2,637.1 448.2,638.1 450.0,641.0 C451.8,643.9 456.4,648.3 459.0,652.0 C461.6,655.7 463.3,659.2 465.5,663.0 C467.7,666.8 469.8,670.3 472.0,674.5 C474.2,678.7 476.8,683.9 479.0,688.0 C481.2,692.1 483.3,695.3 485.5,699.0 C487.7,702.7 490.3,706.0 492.0,710.0 C493.7,714.0 495.5,719.3 495.5,723.0 C495.5,726.7 494.0,728.6 492.0,732.0 C490.0,735.4 486.0,739.8 483.5,743.5 C481.0,747.2 478.6,751.2 477.0,754.5 C475.4,757.8 475.5,760.2 474.0,763.0 C472.5,765.8 470.5,767.2 468.0,771.0 C465.5,774.8 460.0,780.3 459.0,786.0 C458.0,791.7 462.2,799.7 462.0,805.0 C461.8,810.3 459.8,813.0 458.0,818.0 C456.2,823.0 454.3,829.3 451.0,835.0 C447.7,840.7 441.2,846.8 438.0,852.0 C434.8,857.2 433.0,863.7 432.0,866.0 L432,870 L30,870 Z"/></clipPath>
<filter id="b4" x="-10%" y="-10%" width="120%" height="120%"><feGaussianBlur stdDeviation="4"/></filter>
<filter id="b8" x="-10%" y="-10%" width="120%" height="120%"><feGaussianBlur stdDeviation="8"/></filter>
<filter id="b14" x="-15%" y="-15%" width="130%" height="130%"><feGaussianBlur stdDeviation="14"/></filter>
<filter id="b2" x="-10%" y="-10%" width="120%" height="120%"><feGaussianBlur stdDeviation="2"/></filter>
<filter id="relief" filterUnits="userSpaceOnUse" x="56" y="225" width="981" height="627" color-interpolation-filters="sRGB">
  <feTurbulence type="fractalNoise" baseFrequency="0.065" numOctaves="4" seed="11" result="n"/>
  <feDiffuseLighting in="n" surfaceScale="5" diffuseConstant="1" lighting-color="#fff" result="L"><feDistantLight azimuth="225" elevation="45"/></feDiffuseLighting>
  <feColorMatrix in="L" type="matrix" values="0 0 0 0 .38  0 0 0 0 .4  0 0 0 0 .2  -1.15 0 0 0 .813" result="sh"/>
  <feColorMatrix in="L" type="matrix" values="0 0 0 0 1  0 0 0 0 1  0 0 0 0 .9  1.3 0 0 0 -.919" result="hl"/>
  <feMerge><feMergeNode in="sh"/><feMergeNode in="hl"/></feMerge>
</filter>
<filter id="reliefD" filterUnits="userSpaceOnUse" x="-600" y="-300" width="2200" height="1800" color-interpolation-filters="sRGB">
  <feTurbulence type="fractalNoise" baseFrequency="0.028 0.075" numOctaves="4" seed="5" result="n"/>
  <feDiffuseLighting in="n" surfaceScale="5" diffuseConstant="1" lighting-color="#fff" result="L"><feDistantLight azimuth="270" elevation="45"/></feDiffuseLighting>
  <feColorMatrix in="L" type="matrix" values="0 0 0 0 .38  0 0 0 0 .4  0 0 0 0 .2  -1.15 0 0 0 .813" result="sh"/>
  <feColorMatrix in="L" type="matrix" values="0 0 0 0 1  0 0 0 0 1  0 0 0 0 .9  1.3 0 0 0 -.919" result="hl"/>
  <feMerge><feMergeNode in="sh"/><feMergeNode in="hl"/></feMerge>
</filter>
<filter id="veg" filterUnits="userSpaceOnUse" x="56" y="225" width="981" height="627" color-interpolation-filters="sRGB">
  <feTurbulence type="fractalNoise" baseFrequency="0.06" numOctaves="3" seed="23"/>
  <feColorMatrix type="matrix" values="0 0 0 0 .55  0 0 0 0 .68  0 0 0 0 .42  0 0 0 5 -2.7"/>
</filter>
<filter id="seaN" filterUnits="userSpaceOnUse" x="56" y="225" width="981" height="627" color-interpolation-filters="sRGB">
  <feTurbulence type="fractalNoise" baseFrequency="0.012" numOctaves="2" seed="4"/>
  <feColorMatrix type="matrix" values="0 0 0 0 .45  0 0 0 0 .62  0 0 0 0 .8  0 0 0 2.2 -0.95"/>
</filter>
</defs>
<g clip-path="url(#cm)">
<rect x="56" y="225" width="981" height="627" fill="#d3d5a4"/>
<g clip-path="url(#cSY)"><rect x="400" y="440" width="640" height="420" fill="#e2e0ba"/>
<path d="M430.0,860.0 L470.0,760.0 L500.0,752.0 L560.0,748.0 L592.0,722.0 L606.0,765.0 L598.0,860.0Z" fill="#c6ca8a" opacity=".85" filter="url(#b8)"/>
<g filter="url(#b14)"><path d="M880.0,540.0 L1037.0,520.0 L1037.0,660.0 L960.0,700.0 L880.0,640.0Z" fill="#e6e4c6" opacity=".9"/><path d="M680.0,540.0 L860.0,560.0 L840.0,700.0 L760.0,852.0 L640.0,852.0 L690.0,700.0Z" fill="#dcdca6" opacity=".8"/><path d="M800.0,700.0 L1037.0,760.0 L1037.0,852.0 L780.0,852.0Z" fill="#e8e6cc" opacity=".9"/></g></g>
<g clip-path="url(#cTR)"><g filter="url(#b14)">
<path d="M40.0,600.0 L100.0,545.0 L140.0,505.0 L175.0,470.0 L200.0,450.0 L235.0,430.0 L262.0,405.0 L290.0,395.0 L315.0,375.0 L350.0,372.0 L385.0,335.0 L420.0,300.0 L450.0,278.0 L480.0,262.0 L500.0,300.0 L505.0,340.0 L530.0,360.0 L560.0,340.0 L600.0,330.0 L650.0,345.0 L700.0,330.0 L760.0,300.0 L800.0,260.0 L830.0,225.0 L40.0,200.0Z" fill="#c5c796" opacity=".78"/>
<path d="M640.0,330.0 L668.0,380.0 L648.0,440.0 L634.0,500.0 L614.0,560.0 L598.0,620.0 L582.0,660.0 L556.0,700.0 L520.0,740.0 L480.0,745.0 L500.0,690.0 L520.0,640.0 L545.0,600.0 L558.0,540.0 L563.0,470.0 L585.0,400.0 L610.0,350.0Z" fill="#bcbd88" opacity=".8"/>
<path d="M720.0,350.0 L800.0,300.0 L850.0,225.0 L1060.0,225.0 L1060.0,450.0 L900.0,500.0 L760.0,500.0 L700.0,460.0Z" fill="#dbd9a3" opacity=".95"/>
<path d="M695.0,255.0 L760.0,232.0 L790.0,285.0 L745.0,335.0 L700.0,322.0Z" fill="#dbd8a6" opacity=".85"/>
<path d="M30.0,200.0 L230.0,200.0 L215.0,270.0 L160.0,300.0 L100.0,330.0 L30.0,370.0Z" fill="#dcdcb6" opacity=".9"/>
<path d="M230.0,450.0 L290.0,410.0 L350.0,390.0 L400.0,340.0 L450.0,300.0 L490.0,320.0 L500.0,400.0 L480.0,450.0 L440.0,490.0 L400.0,500.0 L330.0,540.0 L250.0,500.0Z" fill="#d6d9a6" opacity=".9"/>
</g>
<path d="M40.0,345.0 L76.0,338.0 L96.0,330.0 L116.0,318.0 L136.0,304.0 L152.0,298.0 L176.0,290.0 L200.0,280.0 L218.0,286.0 L204.0,308.0 L178.0,323.0 L157.0,333.0 L142.7,343.0 L122.7,356.0 L104.0,368.0 L92.0,378.0 L104.0,392.0 L108.0,402.0 L92.0,414.0 L78.0,430.0 L62.0,448.0 L40.0,462.0Z" fill="#d2d1c6" opacity="1" filter="url(#b2)"/>
</g>
<g clip-path="url(#cTR)" fill="none" stroke-linejoin="round" stroke-linecap="round"><path d="M481.0,748.5 L488.5,747.0 L499.0,745.6 L505.6,750.0 L507.8,759.0 L514.4,765.6 L527.8,767.8 L538.5,778.0 L543.5,767.5 L545.6,755.0 L554.4,743.3 L565.6,739.0 L572.2,730.0 L574.4,725.6 L585.6,729.0 L592.2,724.0 L596.5,712.0 L596.0,700.0 L593.5,690.0 L596.7,681.0 L594.4,670.0 L598.0,662.0 L606.0,660.0 L621.0,657.5 L636.0,655.0 L656.0,657.5 L671.0,655.0 L668.5,645.0 L663.5,630.0 L651.0,625.0 L648.5,612.5 L638.5,600.0 L633.5,580.0 L641.0,567.5 L642.0,550.0 L643.5,527.5 L653.5,512.5 L656.0,492.5 L663.5,477.5 L681.0,480.0 L693.5,487.5 L706.0,490.0 L721.0,491.0 L733.5,495.0 L746.0,502.5 L753.5,507.5 L752.0,522.5 L761.0,533.0 L768.5,535.0 L771.0,526.0 L781.0,521.5 L789.0,528.0 L806.0,526.0 L831.0,528.0 L851.0,532.5 L861.0,532.5 L866.0,525.0 L881.0,515.0 L896.0,507.5 L906.0,500.0 L916.0,502.5 L931.0,499.0 L946.0,492.5 L961.0,485.0 L976.0,480.0 L991.0,475.0 L996.0,467.5 L1011.0,462.5 L1021.0,457.5 L1037.0,454.0" stroke="#c6dc9a" stroke-width="27"/><path d="M481.0,748.5 L488.5,747.0 L499.0,745.6 L505.6,750.0 L507.8,759.0 L514.4,765.6 L527.8,767.8 L538.5,778.0 L543.5,767.5 L545.6,755.0 L554.4,743.3 L565.6,739.0 L572.2,730.0 L574.4,725.6 L585.6,729.0 L592.2,724.0 L596.5,712.0 L596.0,700.0 L593.5,690.0 L596.7,681.0 L594.4,670.0 L598.0,662.0 L606.0,660.0 L621.0,657.5 L636.0,655.0 L656.0,657.5 L671.0,655.0 L668.5,645.0 L663.5,630.0 L651.0,625.0 L648.5,612.5 L638.5,600.0 L633.5,580.0 L641.0,567.5 L642.0,550.0 L643.5,527.5 L653.5,512.5 L656.0,492.5 L663.5,477.5 L681.0,480.0 L693.5,487.5 L706.0,490.0 L721.0,491.0 L733.5,495.0 L746.0,502.5 L753.5,507.5 L752.0,522.5 L761.0,533.0 L768.5,535.0 L771.0,526.0 L781.0,521.5 L789.0,528.0 L806.0,526.0 L831.0,528.0 L851.0,532.5 L861.0,532.5 L866.0,525.0 L881.0,515.0 L896.0,507.5 L906.0,500.0 L916.0,502.5 L931.0,499.0 L946.0,492.5 L961.0,485.0 L976.0,480.0 L991.0,475.0 L996.0,467.5 L1011.0,462.5 L1021.0,457.5 L1037.0,454.0" stroke="#aac878" stroke-width="11"/></g>
<g clip-path="url(#cSY)" fill="none" stroke-linejoin="round" stroke-linecap="round" opacity=".9"><path d="M481.0,748.5 L488.5,747.0 L499.0,745.6 L505.6,750.0 L507.8,759.0 L514.4,765.6 L527.8,767.8 L538.5,778.0 L543.5,767.5 L545.6,755.0 L554.4,743.3 L565.6,739.0 L572.2,730.0 L574.4,725.6 L585.6,729.0 L592.2,724.0 L596.5,712.0 L596.0,700.0 L593.5,690.0 L596.7,681.0 L594.4,670.0 L598.0,662.0 L606.0,660.0 L621.0,657.5 L636.0,655.0 L656.0,657.5 L671.0,655.0 L668.5,645.0 L663.5,630.0 L651.0,625.0 L648.5,612.5 L638.5,600.0 L633.5,580.0 L641.0,567.5 L642.0,550.0 L643.5,527.5 L653.5,512.5 L656.0,492.5 L663.5,477.5 L681.0,480.0 L693.5,487.5 L706.0,490.0 L721.0,491.0 L733.5,495.0 L746.0,502.5 L753.5,507.5 L752.0,522.5 L761.0,533.0 L768.5,535.0 L771.0,526.0 L781.0,521.5 L789.0,528.0 L806.0,526.0 L831.0,528.0 L851.0,532.5 L861.0,532.5 L866.0,525.0 L881.0,515.0 L896.0,507.5 L906.0,500.0 L916.0,502.5 L931.0,499.0 L946.0,492.5 L961.0,485.0 L976.0,480.0 L991.0,475.0 L996.0,467.5 L1011.0,462.5 L1021.0,457.5 L1037.0,454.0" stroke="#e0dc92" stroke-width="29"/><path d="M481.0,748.5 L488.5,747.0 L499.0,745.6 L505.6,750.0 L507.8,759.0 L514.4,765.6 L527.8,767.8 L538.5,778.0 L543.5,767.5 L545.6,755.0 L554.4,743.3 L565.6,739.0 L572.2,730.0 L574.4,725.6 L585.6,729.0 L592.2,724.0 L596.5,712.0 L596.0,700.0 L593.5,690.0 L596.7,681.0 L594.4,670.0 L598.0,662.0 L606.0,660.0 L621.0,657.5 L636.0,655.0 L656.0,657.5 L671.0,655.0 L668.5,645.0 L663.5,630.0 L651.0,625.0 L648.5,612.5 L638.5,600.0 L633.5,580.0 L641.0,567.5 L642.0,550.0 L643.5,527.5 L653.5,512.5 L656.0,492.5 L663.5,477.5 L681.0,480.0 L693.5,487.5 L706.0,490.0 L721.0,491.0 L733.5,495.0 L746.0,502.5 L753.5,507.5 L752.0,522.5 L761.0,533.0 L768.5,535.0 L771.0,526.0 L781.0,521.5 L789.0,528.0 L806.0,526.0 L831.0,528.0 L851.0,532.5 L861.0,532.5 L866.0,525.0 L881.0,515.0 L896.0,507.5 L906.0,500.0 L916.0,502.5 L931.0,499.0 L946.0,492.5 L961.0,485.0 L976.0,480.0 L991.0,475.0 L996.0,467.5 L1011.0,462.5 L1021.0,457.5 L1037.0,454.0" stroke="#d6cf60" stroke-width="22"/><path d="M481.0,748.5 L488.5,747.0 L499.0,745.6 L505.6,750.0 L507.8,759.0 L514.4,765.6 L527.8,767.8 L538.5,778.0 L543.5,767.5 L545.6,755.0 L554.4,743.3 L565.6,739.0 L572.2,730.0 L574.4,725.6 L585.6,729.0 L592.2,724.0 L596.5,712.0 L596.0,700.0 L593.5,690.0 L596.7,681.0 L594.4,670.0 L598.0,662.0 L606.0,660.0 L621.0,657.5 L636.0,655.0 L656.0,657.5 L671.0,655.0 L668.5,645.0 L663.5,630.0 L651.0,625.0 L648.5,612.5 L638.5,600.0 L633.5,580.0 L641.0,567.5 L642.0,550.0 L643.5,527.5 L653.5,512.5 L656.0,492.5 L663.5,477.5 L681.0,480.0 L693.5,487.5 L706.0,490.0 L721.0,491.0 L733.5,495.0 L746.0,502.5 L753.5,507.5 L752.0,522.5 L761.0,533.0 L768.5,535.0 L771.0,526.0 L781.0,521.5 L789.0,528.0 L806.0,526.0 L831.0,528.0 L851.0,532.5 L861.0,532.5 L866.0,525.0 L881.0,515.0 L896.0,507.5 L906.0,500.0 L916.0,502.5 L931.0,499.0 L946.0,492.5 L961.0,485.0 L976.0,480.0 L991.0,475.0 L996.0,467.5 L1011.0,462.5 L1021.0,457.5 L1037.0,454.0" stroke="#c3bb5c" stroke-width="10"/></g>
<g clip-path="url(#cTR)"><path d="M30.0,612.0 C32.3,609.3 39.7,600.9 44.0,596.0 C48.3,591.1 51.5,587.2 56.0,582.5 C60.5,577.8 65.6,572.9 71.0,567.5 C76.4,562.1 82.7,555.8 88.5,550.0 C94.3,544.2 100.6,537.1 106.0,532.5 C111.4,527.9 115.6,526.2 121.0,522.5 C126.4,518.8 132.7,514.2 138.5,510.0 C144.3,505.8 151.0,501.2 156.0,497.5 C161.0,493.8 163.5,489.6 168.5,487.5 C173.5,485.4 179.8,485.2 186.0,485.0 C192.2,484.8 200.2,484.8 206.0,486.0 C211.8,487.2 216.8,490.2 221.0,492.5 C225.2,494.8 228.1,497.2 231.0,500.0 C233.9,502.8 235.2,508.0 238.5,509.0 C241.8,510.0 246.8,505.4 251.0,506.0 C255.2,506.6 259.3,509.8 263.5,512.5 C267.7,515.2 271.4,519.2 276.0,522.5 C280.6,525.8 286.0,529.2 291.0,532.5 C296.0,535.8 301.0,539.6 306.0,542.5 C311.0,545.4 316.4,547.8 321.0,550.0 C325.6,552.2 329.8,553.5 333.5,556.0 C337.2,558.5 340.2,565.2 343.5,565.0 C346.8,564.8 350.2,557.5 353.5,555.0 C356.8,552.5 359.8,550.8 363.5,550.0 C367.2,549.2 371.8,549.3 376.0,550.0 C380.2,550.7 385.2,552.8 388.5,554.0 C391.8,555.2 393.7,557.2 396.0,557.0 C398.3,556.8 400.3,554.8 402.5,553.0 C404.7,551.2 407.3,548.7 409.0,546.5 C410.7,544.3 412.0,542.6 412.5,540.0 C413.0,537.4 411.4,533.4 412.0,531.0 C412.6,528.6 414.2,527.3 416.0,525.5 C417.8,523.7 420.3,521.7 422.5,520.0 C424.7,518.3 427.2,516.9 429.0,515.5 C430.8,514.1 433.7,512.3 433.0,511.5 C432.3,510.7 427.5,511.1 425.0,510.5 C422.5,509.9 420.5,508.2 418.0,508.0 C415.5,507.8 410.7,509.4 410.0,509.0 C409.3,508.6 412.2,507.0 414.0,505.5 C415.8,504.0 418.0,501.2 420.5,500.0 C423.0,498.8 425.7,498.3 429.0,498.0 C432.3,497.7 436.8,498.2 440.5,498.0 C444.2,497.8 448.2,497.7 451.5,496.5 C454.8,495.3 457.6,493.4 460.5,491.0 C463.4,488.6 466.1,485.0 469.0,482.0 C471.9,479.0 475.0,475.9 478.0,473.0 C481.0,470.1 484.3,466.7 487.0,464.5 C489.7,462.3 491.8,461.9 494.0,460.0 C496.2,458.1 498.7,455.0 500.5,453.0 C502.3,451.0 502.8,448.3 505.0,448.0 C507.2,447.7 510.7,449.3 514.0,451.0 C517.3,452.7 521.7,455.8 525.0,458.0 C528.3,460.2 531.4,462.0 534.0,464.5 C536.6,467.0 538.3,470.1 540.5,473.0 C542.7,475.9 545.2,478.7 547.0,482.0 C548.8,485.3 550.6,489.7 551.5,493.0 C552.4,496.3 552.7,498.7 552.5,502.0 C552.3,505.3 550.5,509.2 550.5,513.0 C550.5,516.8 551.9,521.2 552.5,524.5 C553.1,527.8 554.6,529.7 554.0,533.0 C553.4,536.3 550.9,541.5 549.0,544.5 C547.1,547.5 545.0,548.8 542.5,551.0 C540.0,553.2 536.9,555.8 534.0,558.0 C531.1,560.2 528.3,562.3 525.0,564.5 C521.7,566.7 517.0,569.2 514.0,571.0 C511.0,572.8 509.5,574.3 507.0,575.5 C504.5,576.7 502.2,575.9 499.0,578.0 C495.8,580.1 491.7,584.5 488.0,588.0 C484.3,591.5 480.0,595.7 477.0,599.0 C474.0,602.3 471.9,605.0 470.0,608.0 C468.1,611.0 468.1,614.1 465.5,617.0 C462.9,619.9 457.4,622.6 454.5,625.5 C451.6,628.4 448.8,631.9 448.0,634.5 C447.2,637.1 448.2,638.1 450.0,641.0 C451.8,643.9 456.4,648.3 459.0,652.0 C461.6,655.7 463.3,659.2 465.5,663.0 C467.7,666.8 469.8,670.3 472.0,674.5 C474.2,678.7 476.8,683.9 479.0,688.0 C481.2,692.1 483.3,695.3 485.5,699.0 C487.7,702.7 490.3,706.0 492.0,710.0 C493.7,714.0 495.5,719.3 495.5,723.0 C495.5,726.7 494.0,728.6 492.0,732.0 C490.0,735.4 486.0,739.8 483.5,743.5 C481.0,747.2 478.6,751.2 477.0,754.5 C475.4,757.8 475.5,760.2 474.0,763.0 C472.5,765.8 470.5,767.2 468.0,771.0 C465.5,774.8 460.0,780.3 459.0,786.0 C458.0,791.7 462.2,799.7 462.0,805.0 C461.8,810.3 459.8,813.0 458.0,818.0 C456.2,823.0 454.3,829.3 451.0,835.0 C447.7,840.7 441.2,846.8 438.0,852.0 C434.8,857.2 433.0,863.7 432.0,866.0" fill="none" stroke="#d2dc9c" stroke-width="22" stroke-linejoin="round" opacity=".8"/>
<path d="M30.0,612.0 C32.3,609.3 39.7,600.9 44.0,596.0 C48.3,591.1 51.5,587.2 56.0,582.5 C60.5,577.8 65.6,572.9 71.0,567.5 C76.4,562.1 82.7,555.8 88.5,550.0 C94.3,544.2 100.6,537.1 106.0,532.5 C111.4,527.9 115.6,526.2 121.0,522.5 C126.4,518.8 132.7,514.2 138.5,510.0 C144.3,505.8 151.0,501.2 156.0,497.5 C161.0,493.8 163.5,489.6 168.5,487.5 C173.5,485.4 179.8,485.2 186.0,485.0 C192.2,484.8 200.2,484.8 206.0,486.0 C211.8,487.2 216.8,490.2 221.0,492.5 C225.2,494.8 228.1,497.2 231.0,500.0 C233.9,502.8 235.2,508.0 238.5,509.0 C241.8,510.0 246.8,505.4 251.0,506.0 C255.2,506.6 259.3,509.8 263.5,512.5 C267.7,515.2 271.4,519.2 276.0,522.5 C280.6,525.8 286.0,529.2 291.0,532.5 C296.0,535.8 301.0,539.6 306.0,542.5 C311.0,545.4 316.4,547.8 321.0,550.0 C325.6,552.2 329.8,553.5 333.5,556.0 C337.2,558.5 340.2,565.2 343.5,565.0 C346.8,564.8 350.2,557.5 353.5,555.0 C356.8,552.5 359.8,550.8 363.5,550.0 C367.2,549.2 371.8,549.3 376.0,550.0 C380.2,550.7 385.2,552.8 388.5,554.0 C391.8,555.2 393.7,557.2 396.0,557.0 C398.3,556.8 400.3,554.8 402.5,553.0 C404.7,551.2 407.3,548.7 409.0,546.5 C410.7,544.3 412.0,542.6 412.5,540.0 C413.0,537.4 411.4,533.4 412.0,531.0 C412.6,528.6 414.2,527.3 416.0,525.5 C417.8,523.7 420.3,521.7 422.5,520.0 C424.7,518.3 427.2,516.9 429.0,515.5 C430.8,514.1 433.7,512.3 433.0,511.5 C432.3,510.7 427.5,511.1 425.0,510.5 C422.5,509.9 420.5,508.2 418.0,508.0 C415.5,507.8 410.7,509.4 410.0,509.0 C409.3,508.6 412.2,507.0 414.0,505.5 C415.8,504.0 418.0,501.2 420.5,500.0 C423.0,498.8 425.7,498.3 429.0,498.0 C432.3,497.7 436.8,498.2 440.5,498.0 C444.2,497.8 448.2,497.7 451.5,496.5 C454.8,495.3 457.6,493.4 460.5,491.0 C463.4,488.6 466.1,485.0 469.0,482.0 C471.9,479.0 475.0,475.9 478.0,473.0 C481.0,470.1 484.3,466.7 487.0,464.5 C489.7,462.3 491.8,461.9 494.0,460.0 C496.2,458.1 498.7,455.0 500.5,453.0 C502.3,451.0 502.8,448.3 505.0,448.0 C507.2,447.7 510.7,449.3 514.0,451.0 C517.3,452.7 521.7,455.8 525.0,458.0 C528.3,460.2 531.4,462.0 534.0,464.5 C536.6,467.0 538.3,470.1 540.5,473.0 C542.7,475.9 545.2,478.7 547.0,482.0 C548.8,485.3 550.6,489.7 551.5,493.0 C552.4,496.3 552.7,498.7 552.5,502.0 C552.3,505.3 550.5,509.2 550.5,513.0 C550.5,516.8 551.9,521.2 552.5,524.5 C553.1,527.8 554.6,529.7 554.0,533.0 C553.4,536.3 550.9,541.5 549.0,544.5 C547.1,547.5 545.0,548.8 542.5,551.0 C540.0,553.2 536.9,555.8 534.0,558.0 C531.1,560.2 528.3,562.3 525.0,564.5 C521.7,566.7 517.0,569.2 514.0,571.0 C511.0,572.8 509.5,574.3 507.0,575.5 C504.5,576.7 502.2,575.9 499.0,578.0 C495.8,580.1 491.7,584.5 488.0,588.0 C484.3,591.5 480.0,595.7 477.0,599.0 C474.0,602.3 471.9,605.0 470.0,608.0 C468.1,611.0 468.1,614.1 465.5,617.0 C462.9,619.9 457.4,622.6 454.5,625.5 C451.6,628.4 448.8,631.9 448.0,634.5 C447.2,637.1 448.2,638.1 450.0,641.0 C451.8,643.9 456.4,648.3 459.0,652.0 C461.6,655.7 463.3,659.2 465.5,663.0 C467.7,666.8 469.8,670.3 472.0,674.5 C474.2,678.7 476.8,683.9 479.0,688.0 C481.2,692.1 483.3,695.3 485.5,699.0 C487.7,702.7 490.3,706.0 492.0,710.0 C493.7,714.0 495.5,719.3 495.5,723.0 C495.5,726.7 494.0,728.6 492.0,732.0 C490.0,735.4 486.0,739.8 483.5,743.5 C481.0,747.2 478.6,751.2 477.0,754.5 C475.4,757.8 475.5,760.2 474.0,763.0 C472.5,765.8 470.5,767.2 468.0,771.0 C465.5,774.8 460.0,780.3 459.0,786.0 C458.0,791.7 462.2,799.7 462.0,805.0 C461.8,810.3 459.8,813.0 458.0,818.0 C456.2,823.0 454.3,829.3 451.0,835.0 C447.7,840.7 441.2,846.8 438.0,852.0 C434.8,857.2 433.0,863.7 432.0,866.0" fill="none" stroke="#b4cc84" stroke-width="10" stroke-linejoin="round"/></g>
<g clip-path="url(#cSY)"><path d="M30.0,612.0 C32.3,609.3 39.7,600.9 44.0,596.0 C48.3,591.1 51.5,587.2 56.0,582.5 C60.5,577.8 65.6,572.9 71.0,567.5 C76.4,562.1 82.7,555.8 88.5,550.0 C94.3,544.2 100.6,537.1 106.0,532.5 C111.4,527.9 115.6,526.2 121.0,522.5 C126.4,518.8 132.7,514.2 138.5,510.0 C144.3,505.8 151.0,501.2 156.0,497.5 C161.0,493.8 163.5,489.6 168.5,487.5 C173.5,485.4 179.8,485.2 186.0,485.0 C192.2,484.8 200.2,484.8 206.0,486.0 C211.8,487.2 216.8,490.2 221.0,492.5 C225.2,494.8 228.1,497.2 231.0,500.0 C233.9,502.8 235.2,508.0 238.5,509.0 C241.8,510.0 246.8,505.4 251.0,506.0 C255.2,506.6 259.3,509.8 263.5,512.5 C267.7,515.2 271.4,519.2 276.0,522.5 C280.6,525.8 286.0,529.2 291.0,532.5 C296.0,535.8 301.0,539.6 306.0,542.5 C311.0,545.4 316.4,547.8 321.0,550.0 C325.6,552.2 329.8,553.5 333.5,556.0 C337.2,558.5 340.2,565.2 343.5,565.0 C346.8,564.8 350.2,557.5 353.5,555.0 C356.8,552.5 359.8,550.8 363.5,550.0 C367.2,549.2 371.8,549.3 376.0,550.0 C380.2,550.7 385.2,552.8 388.5,554.0 C391.8,555.2 393.7,557.2 396.0,557.0 C398.3,556.8 400.3,554.8 402.5,553.0 C404.7,551.2 407.3,548.7 409.0,546.5 C410.7,544.3 412.0,542.6 412.5,540.0 C413.0,537.4 411.4,533.4 412.0,531.0 C412.6,528.6 414.2,527.3 416.0,525.5 C417.8,523.7 420.3,521.7 422.5,520.0 C424.7,518.3 427.2,516.9 429.0,515.5 C430.8,514.1 433.7,512.3 433.0,511.5 C432.3,510.7 427.5,511.1 425.0,510.5 C422.5,509.9 420.5,508.2 418.0,508.0 C415.5,507.8 410.7,509.4 410.0,509.0 C409.3,508.6 412.2,507.0 414.0,505.5 C415.8,504.0 418.0,501.2 420.5,500.0 C423.0,498.8 425.7,498.3 429.0,498.0 C432.3,497.7 436.8,498.2 440.5,498.0 C444.2,497.8 448.2,497.7 451.5,496.5 C454.8,495.3 457.6,493.4 460.5,491.0 C463.4,488.6 466.1,485.0 469.0,482.0 C471.9,479.0 475.0,475.9 478.0,473.0 C481.0,470.1 484.3,466.7 487.0,464.5 C489.7,462.3 491.8,461.9 494.0,460.0 C496.2,458.1 498.7,455.0 500.5,453.0 C502.3,451.0 502.8,448.3 505.0,448.0 C507.2,447.7 510.7,449.3 514.0,451.0 C517.3,452.7 521.7,455.8 525.0,458.0 C528.3,460.2 531.4,462.0 534.0,464.5 C536.6,467.0 538.3,470.1 540.5,473.0 C542.7,475.9 545.2,478.7 547.0,482.0 C548.8,485.3 550.6,489.7 551.5,493.0 C552.4,496.3 552.7,498.7 552.5,502.0 C552.3,505.3 550.5,509.2 550.5,513.0 C550.5,516.8 551.9,521.2 552.5,524.5 C553.1,527.8 554.6,529.7 554.0,533.0 C553.4,536.3 550.9,541.5 549.0,544.5 C547.1,547.5 545.0,548.8 542.5,551.0 C540.0,553.2 536.9,555.8 534.0,558.0 C531.1,560.2 528.3,562.3 525.0,564.5 C521.7,566.7 517.0,569.2 514.0,571.0 C511.0,572.8 509.5,574.3 507.0,575.5 C504.5,576.7 502.2,575.9 499.0,578.0 C495.8,580.1 491.7,584.5 488.0,588.0 C484.3,591.5 480.0,595.7 477.0,599.0 C474.0,602.3 471.9,605.0 470.0,608.0 C468.1,611.0 468.1,614.1 465.5,617.0 C462.9,619.9 457.4,622.6 454.5,625.5 C451.6,628.4 448.8,631.9 448.0,634.5 C447.2,637.1 448.2,638.1 450.0,641.0 C451.8,643.9 456.4,648.3 459.0,652.0 C461.6,655.7 463.3,659.2 465.5,663.0 C467.7,666.8 469.8,670.3 472.0,674.5 C474.2,678.7 476.8,683.9 479.0,688.0 C481.2,692.1 483.3,695.3 485.5,699.0 C487.7,702.7 490.3,706.0 492.0,710.0 C493.7,714.0 495.5,719.3 495.5,723.0 C495.5,726.7 494.0,728.6 492.0,732.0 C490.0,735.4 486.0,739.8 483.5,743.5 C481.0,747.2 478.6,751.2 477.0,754.5 C475.4,757.8 475.5,760.2 474.0,763.0 C472.5,765.8 470.5,767.2 468.0,771.0 C465.5,774.8 460.0,780.3 459.0,786.0 C458.0,791.7 462.2,799.7 462.0,805.0 C461.8,810.3 459.8,813.0 458.0,818.0 C456.2,823.0 454.3,829.3 451.0,835.0 C447.7,840.7 441.2,846.8 438.0,852.0 C434.8,857.2 433.0,863.7 432.0,866.0" fill="none" stroke="#e0dc92" stroke-width="29" stroke-linejoin="round"/><path d="M30.0,612.0 C32.3,609.3 39.7,600.9 44.0,596.0 C48.3,591.1 51.5,587.2 56.0,582.5 C60.5,577.8 65.6,572.9 71.0,567.5 C76.4,562.1 82.7,555.8 88.5,550.0 C94.3,544.2 100.6,537.1 106.0,532.5 C111.4,527.9 115.6,526.2 121.0,522.5 C126.4,518.8 132.7,514.2 138.5,510.0 C144.3,505.8 151.0,501.2 156.0,497.5 C161.0,493.8 163.5,489.6 168.5,487.5 C173.5,485.4 179.8,485.2 186.0,485.0 C192.2,484.8 200.2,484.8 206.0,486.0 C211.8,487.2 216.8,490.2 221.0,492.5 C225.2,494.8 228.1,497.2 231.0,500.0 C233.9,502.8 235.2,508.0 238.5,509.0 C241.8,510.0 246.8,505.4 251.0,506.0 C255.2,506.6 259.3,509.8 263.5,512.5 C267.7,515.2 271.4,519.2 276.0,522.5 C280.6,525.8 286.0,529.2 291.0,532.5 C296.0,535.8 301.0,539.6 306.0,542.5 C311.0,545.4 316.4,547.8 321.0,550.0 C325.6,552.2 329.8,553.5 333.5,556.0 C337.2,558.5 340.2,565.2 343.5,565.0 C346.8,564.8 350.2,557.5 353.5,555.0 C356.8,552.5 359.8,550.8 363.5,550.0 C367.2,549.2 371.8,549.3 376.0,550.0 C380.2,550.7 385.2,552.8 388.5,554.0 C391.8,555.2 393.7,557.2 396.0,557.0 C398.3,556.8 400.3,554.8 402.5,553.0 C404.7,551.2 407.3,548.7 409.0,546.5 C410.7,544.3 412.0,542.6 412.5,540.0 C413.0,537.4 411.4,533.4 412.0,531.0 C412.6,528.6 414.2,527.3 416.0,525.5 C417.8,523.7 420.3,521.7 422.5,520.0 C424.7,518.3 427.2,516.9 429.0,515.5 C430.8,514.1 433.7,512.3 433.0,511.5 C432.3,510.7 427.5,511.1 425.0,510.5 C422.5,509.9 420.5,508.2 418.0,508.0 C415.5,507.8 410.7,509.4 410.0,509.0 C409.3,508.6 412.2,507.0 414.0,505.5 C415.8,504.0 418.0,501.2 420.5,500.0 C423.0,498.8 425.7,498.3 429.0,498.0 C432.3,497.7 436.8,498.2 440.5,498.0 C444.2,497.8 448.2,497.7 451.5,496.5 C454.8,495.3 457.6,493.4 460.5,491.0 C463.4,488.6 466.1,485.0 469.0,482.0 C471.9,479.0 475.0,475.9 478.0,473.0 C481.0,470.1 484.3,466.7 487.0,464.5 C489.7,462.3 491.8,461.9 494.0,460.0 C496.2,458.1 498.7,455.0 500.5,453.0 C502.3,451.0 502.8,448.3 505.0,448.0 C507.2,447.7 510.7,449.3 514.0,451.0 C517.3,452.7 521.7,455.8 525.0,458.0 C528.3,460.2 531.4,462.0 534.0,464.5 C536.6,467.0 538.3,470.1 540.5,473.0 C542.7,475.9 545.2,478.7 547.0,482.0 C548.8,485.3 550.6,489.7 551.5,493.0 C552.4,496.3 552.7,498.7 552.5,502.0 C552.3,505.3 550.5,509.2 550.5,513.0 C550.5,516.8 551.9,521.2 552.5,524.5 C553.1,527.8 554.6,529.7 554.0,533.0 C553.4,536.3 550.9,541.5 549.0,544.5 C547.1,547.5 545.0,548.8 542.5,551.0 C540.0,553.2 536.9,555.8 534.0,558.0 C531.1,560.2 528.3,562.3 525.0,564.5 C521.7,566.7 517.0,569.2 514.0,571.0 C511.0,572.8 509.5,574.3 507.0,575.5 C504.5,576.7 502.2,575.9 499.0,578.0 C495.8,580.1 491.7,584.5 488.0,588.0 C484.3,591.5 480.0,595.7 477.0,599.0 C474.0,602.3 471.9,605.0 470.0,608.0 C468.1,611.0 468.1,614.1 465.5,617.0 C462.9,619.9 457.4,622.6 454.5,625.5 C451.6,628.4 448.8,631.9 448.0,634.5 C447.2,637.1 448.2,638.1 450.0,641.0 C451.8,643.9 456.4,648.3 459.0,652.0 C461.6,655.7 463.3,659.2 465.5,663.0 C467.7,666.8 469.8,670.3 472.0,674.5 C474.2,678.7 476.8,683.9 479.0,688.0 C481.2,692.1 483.3,695.3 485.5,699.0 C487.7,702.7 490.3,706.0 492.0,710.0 C493.7,714.0 495.5,719.3 495.5,723.0 C495.5,726.7 494.0,728.6 492.0,732.0 C490.0,735.4 486.0,739.8 483.5,743.5 C481.0,747.2 478.6,751.2 477.0,754.5 C475.4,757.8 475.5,760.2 474.0,763.0 C472.5,765.8 470.5,767.2 468.0,771.0 C465.5,774.8 460.0,780.3 459.0,786.0 C458.0,791.7 462.2,799.7 462.0,805.0 C461.8,810.3 459.8,813.0 458.0,818.0 C456.2,823.0 454.3,829.3 451.0,835.0 C447.7,840.7 441.2,846.8 438.0,852.0 C434.8,857.2 433.0,863.7 432.0,866.0" fill="none" stroke="#d6cf60" stroke-width="21" stroke-linejoin="round"/><path d="M30.0,612.0 C32.3,609.3 39.7,600.9 44.0,596.0 C48.3,591.1 51.5,587.2 56.0,582.5 C60.5,577.8 65.6,572.9 71.0,567.5 C76.4,562.1 82.7,555.8 88.5,550.0 C94.3,544.2 100.6,537.1 106.0,532.5 C111.4,527.9 115.6,526.2 121.0,522.5 C126.4,518.8 132.7,514.2 138.5,510.0 C144.3,505.8 151.0,501.2 156.0,497.5 C161.0,493.8 163.5,489.6 168.5,487.5 C173.5,485.4 179.8,485.2 186.0,485.0 C192.2,484.8 200.2,484.8 206.0,486.0 C211.8,487.2 216.8,490.2 221.0,492.5 C225.2,494.8 228.1,497.2 231.0,500.0 C233.9,502.8 235.2,508.0 238.5,509.0 C241.8,510.0 246.8,505.4 251.0,506.0 C255.2,506.6 259.3,509.8 263.5,512.5 C267.7,515.2 271.4,519.2 276.0,522.5 C280.6,525.8 286.0,529.2 291.0,532.5 C296.0,535.8 301.0,539.6 306.0,542.5 C311.0,545.4 316.4,547.8 321.0,550.0 C325.6,552.2 329.8,553.5 333.5,556.0 C337.2,558.5 340.2,565.2 343.5,565.0 C346.8,564.8 350.2,557.5 353.5,555.0 C356.8,552.5 359.8,550.8 363.5,550.0 C367.2,549.2 371.8,549.3 376.0,550.0 C380.2,550.7 385.2,552.8 388.5,554.0 C391.8,555.2 393.7,557.2 396.0,557.0 C398.3,556.8 400.3,554.8 402.5,553.0 C404.7,551.2 407.3,548.7 409.0,546.5 C410.7,544.3 412.0,542.6 412.5,540.0 C413.0,537.4 411.4,533.4 412.0,531.0 C412.6,528.6 414.2,527.3 416.0,525.5 C417.8,523.7 420.3,521.7 422.5,520.0 C424.7,518.3 427.2,516.9 429.0,515.5 C430.8,514.1 433.7,512.3 433.0,511.5 C432.3,510.7 427.5,511.1 425.0,510.5 C422.5,509.9 420.5,508.2 418.0,508.0 C415.5,507.8 410.7,509.4 410.0,509.0 C409.3,508.6 412.2,507.0 414.0,505.5 C415.8,504.0 418.0,501.2 420.5,500.0 C423.0,498.8 425.7,498.3 429.0,498.0 C432.3,497.7 436.8,498.2 440.5,498.0 C444.2,497.8 448.2,497.7 451.5,496.5 C454.8,495.3 457.6,493.4 460.5,491.0 C463.4,488.6 466.1,485.0 469.0,482.0 C471.9,479.0 475.0,475.9 478.0,473.0 C481.0,470.1 484.3,466.7 487.0,464.5 C489.7,462.3 491.8,461.9 494.0,460.0 C496.2,458.1 498.7,455.0 500.5,453.0 C502.3,451.0 502.8,448.3 505.0,448.0 C507.2,447.7 510.7,449.3 514.0,451.0 C517.3,452.7 521.7,455.8 525.0,458.0 C528.3,460.2 531.4,462.0 534.0,464.5 C536.6,467.0 538.3,470.1 540.5,473.0 C542.7,475.9 545.2,478.7 547.0,482.0 C548.8,485.3 550.6,489.7 551.5,493.0 C552.4,496.3 552.7,498.7 552.5,502.0 C552.3,505.3 550.5,509.2 550.5,513.0 C550.5,516.8 551.9,521.2 552.5,524.5 C553.1,527.8 554.6,529.7 554.0,533.0 C553.4,536.3 550.9,541.5 549.0,544.5 C547.1,547.5 545.0,548.8 542.5,551.0 C540.0,553.2 536.9,555.8 534.0,558.0 C531.1,560.2 528.3,562.3 525.0,564.5 C521.7,566.7 517.0,569.2 514.0,571.0 C511.0,572.8 509.5,574.3 507.0,575.5 C504.5,576.7 502.2,575.9 499.0,578.0 C495.8,580.1 491.7,584.5 488.0,588.0 C484.3,591.5 480.0,595.7 477.0,599.0 C474.0,602.3 471.9,605.0 470.0,608.0 C468.1,611.0 468.1,614.1 465.5,617.0 C462.9,619.9 457.4,622.6 454.5,625.5 C451.6,628.4 448.8,631.9 448.0,634.5 C447.2,637.1 448.2,638.1 450.0,641.0 C451.8,643.9 456.4,648.3 459.0,652.0 C461.6,655.7 463.3,659.2 465.5,663.0 C467.7,666.8 469.8,670.3 472.0,674.5 C474.2,678.7 476.8,683.9 479.0,688.0 C481.2,692.1 483.3,695.3 485.5,699.0 C487.7,702.7 490.3,706.0 492.0,710.0 C493.7,714.0 495.5,719.3 495.5,723.0 C495.5,726.7 494.0,728.6 492.0,732.0 C490.0,735.4 486.0,739.8 483.5,743.5 C481.0,747.2 478.6,751.2 477.0,754.5 C475.4,757.8 475.5,760.2 474.0,763.0 C472.5,765.8 470.5,767.2 468.0,771.0 C465.5,774.8 460.0,780.3 459.0,786.0 C458.0,791.7 462.2,799.7 462.0,805.0 C461.8,810.3 459.8,813.0 458.0,818.0 C456.2,823.0 454.3,829.3 451.0,835.0 C447.7,840.7 441.2,846.8 438.0,852.0 C434.8,857.2 433.0,863.7 432.0,866.0" fill="none" stroke="#c3bb5c" stroke-width="9" stroke-linejoin="round"/></g>
<mask id="mS" maskUnits="userSpaceOnUse" x="56" y="225" width="981" height="627"><rect x="56" y="225" width="981" height="627" fill="#000"/><g filter="url(#b8)">
<rect x="56" y="225" width="981" height="627" fill="#fff" opacity=".10"/>
<path d="M481.0,748.5 L488.5,747.0 L499.0,745.6 L505.6,750.0 L507.8,759.0 L514.4,765.6 L527.8,767.8 L538.5,778.0 L543.5,767.5 L545.6,755.0 L554.4,743.3 L565.6,739.0 L572.2,730.0 L574.4,725.6 L585.6,729.0 L592.2,724.0 L596.5,712.0 L596.0,700.0 L593.5,690.0 L596.7,681.0 L594.4,670.0 L598.0,662.0 L606.0,660.0 L621.0,657.5 L636.0,655.0 L656.0,657.5 L671.0,655.0 L668.5,645.0 L663.5,630.0 L651.0,625.0 L648.5,612.5 L638.5,600.0 L633.5,580.0 L641.0,567.5 L642.0,550.0 L643.5,527.5 L653.5,512.5 L656.0,492.5 L663.5,477.5 L681.0,480.0 L693.5,487.5 L706.0,490.0 L721.0,491.0 L733.5,495.0 L746.0,502.5 L753.5,507.5 L752.0,522.5 L761.0,533.0 L768.5,535.0 L771.0,526.0 L781.0,521.5 L789.0,528.0 L806.0,526.0 L831.0,528.0 L851.0,532.5 L861.0,532.5 L866.0,525.0 L881.0,515.0 L896.0,507.5 L906.0,500.0 L916.0,502.5 L931.0,499.0 L946.0,492.5 L961.0,485.0 L976.0,480.0 L991.0,475.0 L996.0,467.5 L1011.0,462.5 L1021.0,457.5 L1037.0,454.0 L1037.0,225.0 L56.0,225.0 L56.0,760.0 L470.0,760.0Z" fill="#fff" opacity=".2"/>
<path d="M40.0,600.0 L100.0,545.0 L140.0,505.0 L175.0,470.0 L200.0,450.0 L235.0,430.0 L262.0,405.0 L290.0,395.0 L315.0,375.0 L350.0,372.0 L385.0,335.0 L420.0,300.0 L450.0,278.0 L480.0,262.0 L500.0,300.0 L505.0,340.0 L530.0,360.0 L560.0,340.0 L600.0,330.0 L650.0,345.0 L700.0,330.0 L760.0,300.0 L800.0,260.0 L830.0,225.0 L40.0,200.0Z" fill="#fff" opacity=".9"/>
<path d="M640.0,330.0 L668.0,380.0 L648.0,440.0 L634.0,500.0 L614.0,560.0 L598.0,620.0 L582.0,660.0 L556.0,700.0 L520.0,740.0 L480.0,745.0 L500.0,690.0 L520.0,640.0 L545.0,600.0 L558.0,540.0 L563.0,470.0 L585.0,400.0 L610.0,350.0Z" fill="#fff" opacity=".9"/>
<path d="M440.0,852.0 L470.0,760.0 L500.0,745.0 L560.0,745.0 L600.0,700.0 L610.0,760.0 L590.0,852.0Z" fill="#fff" opacity=".9"/>
<path d="M700.0,330.0 L800.0,260.0 L830.0,225.0 L1037.0,225.0 L1037.0,450.0 L900.0,490.0 L760.0,500.0 L690.0,440.0Z" fill="#fff" opacity=".45"/>
<path d="M610.0,600.0 L690.0,600.0 L690.0,852.0 L610.0,852.0Z" fill="#fff" opacity=".22"/>
<path d="M240.0,452.0 L290.0,412.0 L350.0,392.0 L400.0,345.0 L450.0,305.0 L488.0,322.0 L498.0,400.0 L480.0,450.0 L440.0,490.0 L400.0,500.0 L330.0,540.0 L250.0,500.0Z" fill="#000" opacity=".75"/>
<path d="M700.0,258.0 L758.0,238.0 L784.0,285.0 L745.0,328.0 L704.0,318.0Z" fill="#000" opacity=".5"/>
<path d="M40.0,210.0 L230.0,210.0 L214.0,262.0 L170.0,290.0 L120.0,312.0 L80.0,335.0 L40.0,350.0Z" fill="#000" opacity=".6"/>
</g></mask>
<mask id="mT" maskUnits="userSpaceOnUse" x="56" y="225" width="981" height="627"><rect x="56" y="225" width="981" height="627" fill="#000"/><g filter="url(#b8)">
<path d="M40.0,600.0 L100.0,545.0 L140.0,505.0 L175.0,470.0 L200.0,450.0 L235.0,430.0 L262.0,405.0 L280.0,380.0 L270.0,330.0 L230.0,300.0 L215.0,270.0 L160.0,300.0 L100.0,330.0 L40.0,370.0Z" fill="#fff" opacity=".9"/>
</g></mask>
<mask id="mV" maskUnits="userSpaceOnUse" x="56" y="225" width="981" height="627"><rect x="56" y="225" width="981" height="627" fill="#000"/><g filter="url(#b8)">
<path d="M40.0,600.0 L100.0,545.0 L140.0,505.0 L175.0,470.0 L200.0,450.0 L235.0,430.0 L262.0,405.0 L290.0,395.0 L315.0,375.0 L350.0,372.0 L385.0,335.0 L420.0,300.0 L450.0,278.0 L480.0,262.0 L500.0,300.0 L505.0,340.0 L530.0,360.0 L560.0,340.0 L600.0,330.0 L650.0,345.0 L700.0,330.0 L760.0,300.0 L800.0,260.0 L830.0,225.0 L40.0,200.0Z" fill="#fff" opacity=".9"/>
<path d="M640.0,330.0 L668.0,380.0 L648.0,440.0 L634.0,500.0 L614.0,560.0 L598.0,620.0 L582.0,660.0 L556.0,700.0 L520.0,740.0 L480.0,745.0 L500.0,690.0 L520.0,640.0 L545.0,600.0 L558.0,540.0 L563.0,470.0 L585.0,400.0 L610.0,350.0Z" fill="#fff" opacity=".9"/>
<path d="M440.0,852.0 L470.0,760.0 L500.0,745.0 L560.0,745.0 L600.0,700.0 L610.0,760.0 L590.0,852.0Z" fill="#fff" opacity=".9"/>
<path d="M720.0,350.0 L800.0,300.0 L850.0,225.0 L1060.0,225.0 L1060.0,450.0 L900.0,500.0 L760.0,500.0 L700.0,460.0Z" fill="#000" opacity=".8"/>
</g></mask>
<clipPath id="cVeg"><path d="M481.0,748.5 L488.5,747.0 L499.0,745.6 L505.6,750.0 L507.8,759.0 L514.4,765.6 L527.8,767.8 L538.5,778.0 L543.5,767.5 L545.6,755.0 L554.4,743.3 L565.6,739.0 L572.2,730.0 L574.4,725.6 L585.6,729.0 L592.2,724.0 L596.5,712.0 L596.0,700.0 L593.5,690.0 L596.7,681.0 L594.4,670.0 L598.0,662.0 L606.0,660.0 L621.0,657.5 L636.0,655.0 L656.0,657.5 L671.0,655.0 L668.5,645.0 L663.5,630.0 L651.0,625.0 L648.5,612.5 L638.5,600.0 L633.5,580.0 L641.0,567.5 L642.0,550.0 L643.5,527.5 L653.5,512.5 L656.0,492.5 L663.5,477.5 L681.0,480.0 L693.5,487.5 L706.0,490.0 L721.0,491.0 L733.5,495.0 L746.0,502.5 L753.5,507.5 L752.0,522.5 L761.0,533.0 L768.5,535.0 L771.0,526.0 L781.0,521.5 L789.0,528.0 L806.0,526.0 L831.0,528.0 L851.0,532.5 L861.0,532.5 L866.0,525.0 L881.0,515.0 L896.0,507.5 L906.0,500.0 L916.0,502.5 L931.0,499.0 L946.0,492.5 L961.0,485.0 L976.0,480.0 L991.0,475.0 L996.0,467.5 L1011.0,462.5 L1021.0,457.5 L1037.0,454.0 L1037.0,225.0 L56.0,225.0 L56.0,760.0 L470.0,760.0Z"/><path d="M430.0,852.0 L470.0,745.0 L600.0,700.0 L620.0,760.0 L600.0,852.0Z"/></clipPath>
<g clip-path="url(#cVeg)"><g mask="url(#mV)"><rect x="56" y="225" width="981" height="627" filter="url(#veg)" opacity=".6"/></g></g>
<g mask="url(#mS)"><rect x="56" y="225" width="981" height="627" filter="url(#relief)"/></g>
<mask id="mA" maskUnits="userSpaceOnUse" x="56" y="225" width="981" height="627"><rect x="56" y="225" width="981" height="627" fill="#000"/><g filter="url(#b4)"><path d="M625.0,345.0 L655.0,385.0 L640.0,440.0 L626.0,500.0 L606.0,560.0 L590.0,620.0 L572.0,660.0 L548.0,700.0 L520.0,735.0 L495.0,735.0 L510.0,690.0 L530.0,640.0 L552.0,600.0 L566.0,540.0 L572.0,470.0 L592.0,400.0 L612.0,355.0Z" fill="#fff"/></g></mask>
<g mask="url(#mA)"><g transform="rotate(-78 590 520)"><rect x="-400" y="-300" width="1900" height="1700" filter="url(#reliefD)"/></g></g>
<g mask="url(#mT)"><g transform="rotate(-38 200 400)"><rect x="-400" y="-100" width="1400" height="1200" filter="url(#reliefD)" opacity=".8"/></g></g>
<path d="M30.0,612.0 C32.3,609.3 39.7,600.9 44.0,596.0 C48.3,591.1 51.5,587.2 56.0,582.5 C60.5,577.8 65.6,572.9 71.0,567.5 C76.4,562.1 82.7,555.8 88.5,550.0 C94.3,544.2 100.6,537.1 106.0,532.5 C111.4,527.9 115.6,526.2 121.0,522.5 C126.4,518.8 132.7,514.2 138.5,510.0 C144.3,505.8 151.0,501.2 156.0,497.5 C161.0,493.8 163.5,489.6 168.5,487.5 C173.5,485.4 179.8,485.2 186.0,485.0 C192.2,484.8 200.2,484.8 206.0,486.0 C211.8,487.2 216.8,490.2 221.0,492.5 C225.2,494.8 228.1,497.2 231.0,500.0 C233.9,502.8 235.2,508.0 238.5,509.0 C241.8,510.0 246.8,505.4 251.0,506.0 C255.2,506.6 259.3,509.8 263.5,512.5 C267.7,515.2 271.4,519.2 276.0,522.5 C280.6,525.8 286.0,529.2 291.0,532.5 C296.0,535.8 301.0,539.6 306.0,542.5 C311.0,545.4 316.4,547.8 321.0,550.0 C325.6,552.2 329.8,553.5 333.5,556.0 C337.2,558.5 340.2,565.2 343.5,565.0 C346.8,564.8 350.2,557.5 353.5,555.0 C356.8,552.5 359.8,550.8 363.5,550.0 C367.2,549.2 371.8,549.3 376.0,550.0 C380.2,550.7 385.2,552.8 388.5,554.0 C391.8,555.2 393.7,557.2 396.0,557.0 C398.3,556.8 400.3,554.8 402.5,553.0 C404.7,551.2 407.3,548.7 409.0,546.5 C410.7,544.3 412.0,542.6 412.5,540.0 C413.0,537.4 411.4,533.4 412.0,531.0 C412.6,528.6 414.2,527.3 416.0,525.5 C417.8,523.7 420.3,521.7 422.5,520.0 C424.7,518.3 427.2,516.9 429.0,515.5 C430.8,514.1 433.7,512.3 433.0,511.5 C432.3,510.7 427.5,511.1 425.0,510.5 C422.5,509.9 420.5,508.2 418.0,508.0 C415.5,507.8 410.7,509.4 410.0,509.0 C409.3,508.6 412.2,507.0 414.0,505.5 C415.8,504.0 418.0,501.2 420.5,500.0 C423.0,498.8 425.7,498.3 429.0,498.0 C432.3,497.7 436.8,498.2 440.5,498.0 C444.2,497.8 448.2,497.7 451.5,496.5 C454.8,495.3 457.6,493.4 460.5,491.0 C463.4,488.6 466.1,485.0 469.0,482.0 C471.9,479.0 475.0,475.9 478.0,473.0 C481.0,470.1 484.3,466.7 487.0,464.5 C489.7,462.3 491.8,461.9 494.0,460.0 C496.2,458.1 498.7,455.0 500.5,453.0 C502.3,451.0 502.8,448.3 505.0,448.0 C507.2,447.7 510.7,449.3 514.0,451.0 C517.3,452.7 521.7,455.8 525.0,458.0 C528.3,460.2 531.4,462.0 534.0,464.5 C536.6,467.0 538.3,470.1 540.5,473.0 C542.7,475.9 545.2,478.7 547.0,482.0 C548.8,485.3 550.6,489.7 551.5,493.0 C552.4,496.3 552.7,498.7 552.5,502.0 C552.3,505.3 550.5,509.2 550.5,513.0 C550.5,516.8 551.9,521.2 552.5,524.5 C553.1,527.8 554.6,529.7 554.0,533.0 C553.4,536.3 550.9,541.5 549.0,544.5 C547.1,547.5 545.0,548.8 542.5,551.0 C540.0,553.2 536.9,555.8 534.0,558.0 C531.1,560.2 528.3,562.3 525.0,564.5 C521.7,566.7 517.0,569.2 514.0,571.0 C511.0,572.8 509.5,574.3 507.0,575.5 C504.5,576.7 502.2,575.9 499.0,578.0 C495.8,580.1 491.7,584.5 488.0,588.0 C484.3,591.5 480.0,595.7 477.0,599.0 C474.0,602.3 471.9,605.0 470.0,608.0 C468.1,611.0 468.1,614.1 465.5,617.0 C462.9,619.9 457.4,622.6 454.5,625.5 C451.6,628.4 448.8,631.9 448.0,634.5 C447.2,637.1 448.2,638.1 450.0,641.0 C451.8,643.9 456.4,648.3 459.0,652.0 C461.6,655.7 463.3,659.2 465.5,663.0 C467.7,666.8 469.8,670.3 472.0,674.5 C474.2,678.7 476.8,683.9 479.0,688.0 C481.2,692.1 483.3,695.3 485.5,699.0 C487.7,702.7 490.3,706.0 492.0,710.0 C493.7,714.0 495.5,719.3 495.5,723.0 C495.5,726.7 494.0,728.6 492.0,732.0 C490.0,735.4 486.0,739.8 483.5,743.5 C481.0,747.2 478.6,751.2 477.0,754.5 C475.4,757.8 475.5,760.2 474.0,763.0 C472.5,765.8 470.5,767.2 468.0,771.0 C465.5,774.8 460.0,780.3 459.0,786.0 C458.0,791.7 462.2,799.7 462.0,805.0 C461.8,810.3 459.8,813.0 458.0,818.0 C456.2,823.0 454.3,829.3 451.0,835.0 C447.7,840.7 441.2,846.8 438.0,852.0 C434.8,857.2 433.0,863.7 432.0,866.0 L432,870 L30,870 Z" fill="#a7cae6"/>
<g clip-path="url(#cSea)">
<path d="M30.0,622.0 C32.3,620.0 39.7,613.7 44.0,610.0 C48.3,606.3 51.5,603.8 56.0,600.0 C60.5,596.2 64.8,592.1 71.0,587.5 C77.2,582.9 83.5,577.2 93.5,572.5 C103.5,567.8 120.6,561.2 131.0,559.0 C141.4,556.8 147.7,557.2 156.0,559.0 C164.3,560.8 172.7,564.8 181.0,570.0 C189.3,575.2 198.5,582.5 206.0,590.0 C213.5,597.5 219.3,606.7 226.0,615.0 C232.7,623.3 239.8,632.9 246.0,640.0 C252.2,647.1 257.8,653.5 263.5,657.5 C269.2,661.5 274.6,662.6 280.0,664.0 C285.4,665.4 290.8,667.9 296.0,666.0 C301.2,664.1 306.0,657.2 311.0,652.5 C316.0,647.8 320.6,641.1 326.0,637.5 C331.4,633.9 334.3,632.2 343.5,631.0 C352.7,629.8 370.6,628.9 381.0,630.0 C391.4,631.1 398.5,636.5 406.0,637.5 C413.5,638.5 420.3,637.2 426.0,636.0 C431.7,634.8 435.7,631.3 440.0,630.0 C444.3,628.7 450.0,628.3 452.0,628.0 L460,640 L480,700 L470,770 L440,870 L30,870 Z" fill="#95c1e5"/>
<rect x="56" y="540" width="460" height="312" filter="url(#seaN)" opacity=".35"/>
<g filter="url(#b4)">
<path d="M40.0,800.0 C50.0,787.0 81.7,796.7 100.0,792.0 C118.3,787.3 133.3,779.7 150.0,772.0 C166.7,764.3 186.3,753.0 200.0,746.0 C213.7,739.0 225.3,729.7 232.0,730.0 C238.7,730.3 242.8,740.5 240.0,748.0 C237.2,755.5 224.2,766.3 215.0,775.0 C205.8,783.7 193.3,792.8 185.0,800.0 C176.7,807.2 172.5,812.7 165.0,818.0 C157.5,823.3 149.2,827.3 140.0,832.0 C130.8,836.7 118.3,839.7 110.0,846.0 C101.7,852.3 101.7,866.0 90.0,870.0 C78.3,874.0 48.3,881.7 40.0,870.0 C31.7,858.3 30.0,813.0 40.0,800.0Z" fill="#a9d6f8" opacity=".85"/>
<path d="M182.0,812.0 C184.0,804.7 202.0,790.0 212.0,780.0 C222.0,770.0 232.0,762.3 242.0,752.0 C252.0,741.7 263.7,726.2 272.0,718.0 C280.3,709.8 286.5,703.3 292.0,703.0 C297.5,702.7 306.7,709.5 305.0,716.0 C303.3,722.5 290.2,733.3 282.0,742.0 C273.8,750.7 264.3,759.7 256.0,768.0 C247.7,776.3 239.3,784.7 232.0,792.0 C224.7,799.3 217.3,806.7 212.0,812.0 C206.7,817.3 205.0,824.0 200.0,824.0 C195.0,824.0 180.0,819.3 182.0,812.0Z" fill="#80aed6" opacity=".9"/>
<path d="M370.0,720.0 C377.5,714.2 401.7,710.8 410.0,715.0 C418.3,719.2 422.5,735.8 420.0,745.0 C417.5,754.2 404.2,769.2 395.0,770.0 C385.8,770.8 369.2,758.3 365.0,750.0 C360.8,741.7 362.5,725.8 370.0,720.0Z" fill="#86b4da" opacity=".7"/>
<path d="M60.0,640.0 C70.0,626.7 103.3,646.7 120.0,660.0 C136.7,673.3 160.0,703.3 160.0,720.0 C160.0,736.7 136.7,756.7 120.0,760.0 C103.3,763.3 70.0,760.0 60.0,740.0 C50.0,720.0 50.0,653.3 60.0,640.0Z" fill="#9fcdf0" opacity=".7"/>
<path d="M250.0,830.0 C265.0,821.3 301.7,803.3 330.0,800.0 C358.3,796.7 403.3,801.3 420.0,810.0 C436.7,818.7 460.0,845.0 430.0,852.0 C400.0,859.0 270.0,855.7 240.0,852.0 C210.0,848.3 235.0,838.7 250.0,830.0Z" fill="#8ab8de" opacity=".6"/>
</g>
<path d="M30.0,612.0 C32.3,609.3 39.7,600.9 44.0,596.0 C48.3,591.1 51.5,587.2 56.0,582.5 C60.5,577.8 65.6,572.9 71.0,567.5 C76.4,562.1 82.7,555.8 88.5,550.0 C94.3,544.2 100.6,537.1 106.0,532.5 C111.4,527.9 115.6,526.2 121.0,522.5 C126.4,518.8 132.7,514.2 138.5,510.0 C144.3,505.8 151.0,501.2 156.0,497.5 C161.0,493.8 163.5,489.6 168.5,487.5 C173.5,485.4 179.8,485.2 186.0,485.0 C192.2,484.8 200.2,484.8 206.0,486.0 C211.8,487.2 216.8,490.2 221.0,492.5 C225.2,494.8 228.1,497.2 231.0,500.0 C233.9,502.8 235.2,508.0 238.5,509.0 C241.8,510.0 246.8,505.4 251.0,506.0 C255.2,506.6 259.3,509.8 263.5,512.5 C267.7,515.2 271.4,519.2 276.0,522.5 C280.6,525.8 286.0,529.2 291.0,532.5 C296.0,535.8 301.0,539.6 306.0,542.5 C311.0,545.4 316.4,547.8 321.0,550.0 C325.6,552.2 329.8,553.5 333.5,556.0 C337.2,558.5 340.2,565.2 343.5,565.0 C346.8,564.8 350.2,557.5 353.5,555.0 C356.8,552.5 359.8,550.8 363.5,550.0 C367.2,549.2 371.8,549.3 376.0,550.0 C380.2,550.7 385.2,552.8 388.5,554.0 C391.8,555.2 393.7,557.2 396.0,557.0 C398.3,556.8 400.3,554.8 402.5,553.0 C404.7,551.2 407.3,548.7 409.0,546.5 C410.7,544.3 412.0,542.6 412.5,540.0 C413.0,537.4 411.4,533.4 412.0,531.0 C412.6,528.6 414.2,527.3 416.0,525.5 C417.8,523.7 420.3,521.7 422.5,520.0 C424.7,518.3 427.2,516.9 429.0,515.5 C430.8,514.1 433.7,512.3 433.0,511.5 C432.3,510.7 427.5,511.1 425.0,510.5 C422.5,509.9 420.5,508.2 418.0,508.0 C415.5,507.8 410.7,509.4 410.0,509.0 C409.3,508.6 412.2,507.0 414.0,505.5 C415.8,504.0 418.0,501.2 420.5,500.0 C423.0,498.8 425.7,498.3 429.0,498.0 C432.3,497.7 436.8,498.2 440.5,498.0 C444.2,497.8 448.2,497.7 451.5,496.5 C454.8,495.3 457.6,493.4 460.5,491.0 C463.4,488.6 466.1,485.0 469.0,482.0 C471.9,479.0 475.0,475.9 478.0,473.0 C481.0,470.1 484.3,466.7 487.0,464.5 C489.7,462.3 491.8,461.9 494.0,460.0 C496.2,458.1 498.7,455.0 500.5,453.0 C502.3,451.0 502.8,448.3 505.0,448.0 C507.2,447.7 510.7,449.3 514.0,451.0 C517.3,452.7 521.7,455.8 525.0,458.0 C528.3,460.2 531.4,462.0 534.0,464.5 C536.6,467.0 538.3,470.1 540.5,473.0 C542.7,475.9 545.2,478.7 547.0,482.0 C548.8,485.3 550.6,489.7 551.5,493.0 C552.4,496.3 552.7,498.7 552.5,502.0 C552.3,505.3 550.5,509.2 550.5,513.0 C550.5,516.8 551.9,521.2 552.5,524.5 C553.1,527.8 554.6,529.7 554.0,533.0 C553.4,536.3 550.9,541.5 549.0,544.5 C547.1,547.5 545.0,548.8 542.5,551.0 C540.0,553.2 536.9,555.8 534.0,558.0 C531.1,560.2 528.3,562.3 525.0,564.5 C521.7,566.7 517.0,569.2 514.0,571.0 C511.0,572.8 509.5,574.3 507.0,575.5 C504.5,576.7 502.2,575.9 499.0,578.0 C495.8,580.1 491.7,584.5 488.0,588.0 C484.3,591.5 480.0,595.7 477.0,599.0 C474.0,602.3 471.9,605.0 470.0,608.0 C468.1,611.0 468.1,614.1 465.5,617.0 C462.9,619.9 457.4,622.6 454.5,625.5 C451.6,628.4 448.8,631.9 448.0,634.5 C447.2,637.1 448.2,638.1 450.0,641.0 C451.8,643.9 456.4,648.3 459.0,652.0 C461.6,655.7 463.3,659.2 465.5,663.0 C467.7,666.8 469.8,670.3 472.0,674.5 C474.2,678.7 476.8,683.9 479.0,688.0 C481.2,692.1 483.3,695.3 485.5,699.0 C487.7,702.7 490.3,706.0 492.0,710.0 C493.7,714.0 495.5,719.3 495.5,723.0 C495.5,726.7 494.0,728.6 492.0,732.0 C490.0,735.4 486.0,739.8 483.5,743.5 C481.0,747.2 478.6,751.2 477.0,754.5 C475.4,757.8 475.5,760.2 474.0,763.0 C472.5,765.8 470.5,767.2 468.0,771.0 C465.5,774.8 460.0,780.3 459.0,786.0 C458.0,791.7 462.2,799.7 462.0,805.0 C461.8,810.3 459.8,813.0 458.0,818.0 C456.2,823.0 454.3,829.3 451.0,835.0 C447.7,840.7 441.2,846.8 438.0,852.0 C434.8,857.2 433.0,863.7 432.0,866.0" fill="none" stroke="#b3d4ee" stroke-width="7" opacity=".7"/>
</g>
<path d="M30.0,612.0 C32.3,609.3 39.7,600.9 44.0,596.0 C48.3,591.1 51.5,587.2 56.0,582.5 C60.5,577.8 65.6,572.9 71.0,567.5 C76.4,562.1 82.7,555.8 88.5,550.0 C94.3,544.2 100.6,537.1 106.0,532.5 C111.4,527.9 115.6,526.2 121.0,522.5 C126.4,518.8 132.7,514.2 138.5,510.0 C144.3,505.8 151.0,501.2 156.0,497.5 C161.0,493.8 163.5,489.6 168.5,487.5 C173.5,485.4 179.8,485.2 186.0,485.0 C192.2,484.8 200.2,484.8 206.0,486.0 C211.8,487.2 216.8,490.2 221.0,492.5 C225.2,494.8 228.1,497.2 231.0,500.0 C233.9,502.8 235.2,508.0 238.5,509.0 C241.8,510.0 246.8,505.4 251.0,506.0 C255.2,506.6 259.3,509.8 263.5,512.5 C267.7,515.2 271.4,519.2 276.0,522.5 C280.6,525.8 286.0,529.2 291.0,532.5 C296.0,535.8 301.0,539.6 306.0,542.5 C311.0,545.4 316.4,547.8 321.0,550.0 C325.6,552.2 329.8,553.5 333.5,556.0 C337.2,558.5 340.2,565.2 343.5,565.0 C346.8,564.8 350.2,557.5 353.5,555.0 C356.8,552.5 359.8,550.8 363.5,550.0 C367.2,549.2 371.8,549.3 376.0,550.0 C380.2,550.7 385.2,552.8 388.5,554.0 C391.8,555.2 393.7,557.2 396.0,557.0 C398.3,556.8 400.3,554.8 402.5,553.0 C404.7,551.2 407.3,548.7 409.0,546.5 C410.7,544.3 412.0,542.6 412.5,540.0 C413.0,537.4 411.4,533.4 412.0,531.0 C412.6,528.6 414.2,527.3 416.0,525.5 C417.8,523.7 420.3,521.7 422.5,520.0 C424.7,518.3 427.2,516.9 429.0,515.5 C430.8,514.1 433.7,512.3 433.0,511.5 C432.3,510.7 427.5,511.1 425.0,510.5 C422.5,509.9 420.5,508.2 418.0,508.0 C415.5,507.8 410.7,509.4 410.0,509.0 C409.3,508.6 412.2,507.0 414.0,505.5 C415.8,504.0 418.0,501.2 420.5,500.0 C423.0,498.8 425.7,498.3 429.0,498.0 C432.3,497.7 436.8,498.2 440.5,498.0 C444.2,497.8 448.2,497.7 451.5,496.5 C454.8,495.3 457.6,493.4 460.5,491.0 C463.4,488.6 466.1,485.0 469.0,482.0 C471.9,479.0 475.0,475.9 478.0,473.0 C481.0,470.1 484.3,466.7 487.0,464.5 C489.7,462.3 491.8,461.9 494.0,460.0 C496.2,458.1 498.7,455.0 500.5,453.0 C502.3,451.0 502.8,448.3 505.0,448.0 C507.2,447.7 510.7,449.3 514.0,451.0 C517.3,452.7 521.7,455.8 525.0,458.0 C528.3,460.2 531.4,462.0 534.0,464.5 C536.6,467.0 538.3,470.1 540.5,473.0 C542.7,475.9 545.2,478.7 547.0,482.0 C548.8,485.3 550.6,489.7 551.5,493.0 C552.4,496.3 552.7,498.7 552.5,502.0 C552.3,505.3 550.5,509.2 550.5,513.0 C550.5,516.8 551.9,521.2 552.5,524.5 C553.1,527.8 554.6,529.7 554.0,533.0 C553.4,536.3 550.9,541.5 549.0,544.5 C547.1,547.5 545.0,548.8 542.5,551.0 C540.0,553.2 536.9,555.8 534.0,558.0 C531.1,560.2 528.3,562.3 525.0,564.5 C521.7,566.7 517.0,569.2 514.0,571.0 C511.0,572.8 509.5,574.3 507.0,575.5 C504.5,576.7 502.2,575.9 499.0,578.0 C495.8,580.1 491.7,584.5 488.0,588.0 C484.3,591.5 480.0,595.7 477.0,599.0 C474.0,602.3 471.9,605.0 470.0,608.0 C468.1,611.0 468.1,614.1 465.5,617.0 C462.9,619.9 457.4,622.6 454.5,625.5 C451.6,628.4 448.8,631.9 448.0,634.5 C447.2,637.1 448.2,638.1 450.0,641.0 C451.8,643.9 456.4,648.3 459.0,652.0 C461.6,655.7 463.3,659.2 465.5,663.0 C467.7,666.8 469.8,670.3 472.0,674.5 C474.2,678.7 476.8,683.9 479.0,688.0 C481.2,692.1 483.3,695.3 485.5,699.0 C487.7,702.7 490.3,706.0 492.0,710.0 C493.7,714.0 495.5,719.3 495.5,723.0 C495.5,726.7 494.0,728.6 492.0,732.0 C490.0,735.4 486.0,739.8 483.5,743.5 C481.0,747.2 478.6,751.2 477.0,754.5 C475.4,757.8 475.5,760.2 474.0,763.0 C472.5,765.8 470.5,767.2 468.0,771.0 C465.5,774.8 460.0,780.3 459.0,786.0 C458.0,791.7 462.2,799.7 462.0,805.0 C461.8,810.3 459.8,813.0 458.0,818.0 C456.2,823.0 454.3,829.3 451.0,835.0 C447.7,840.7 441.2,846.8 438.0,852.0 C434.8,857.2 433.0,863.7 432.0,866.0" fill="none" stroke="#8fb0a8" stroke-width=".8" opacity=".8"/>
<path d="M80.0,856.0 C79.3,853.3 97.5,844.3 106.0,840.0 C114.5,835.7 122.7,833.2 131.0,830.0 C139.3,826.8 150.5,822.8 156.0,821.0 C161.5,819.2 163.2,818.8 164.0,819.5 C164.8,820.2 164.4,822.4 161.0,825.0 C157.6,827.6 149.3,831.7 143.5,835.0 C137.7,838.3 131.6,841.5 126.0,845.0 C120.4,848.5 117.7,854.2 110.0,856.0 C102.3,857.8 80.7,858.7 80.0,856.0Z" fill="#d9d7b2" stroke="#b9c7a0" stroke-width="1"/>
<path d="M261.0,507.5 C261.3,506.8 265.0,508.8 268.0,511.0 C271.0,513.2 277.7,519.0 279.0,521.0 C280.3,523.0 278.2,524.0 276.0,523.0 C273.8,522.0 268.5,517.6 266.0,515.0 C263.5,512.4 260.7,508.2 261.0,507.5Z" fill="#a9cbea" stroke="#8db0c8" stroke-width=".6"/>
<path d="M300.0,522.5 C302.1,521.0 311.2,519.8 316.0,521.0 C320.8,522.2 324.8,526.4 328.5,530.0 C332.2,533.6 336.4,538.8 338.5,542.5 C340.6,546.2 342.2,550.6 341.0,552.5 C339.8,554.4 335.2,556.1 331.0,554.0 C326.8,551.9 320.6,544.0 316.0,540.0 C311.4,536.0 306.2,532.9 303.5,530.0 C300.8,527.1 297.9,524.0 300.0,522.5Z" fill="#a9cbea" stroke="#8db0c8" stroke-width=".6"/>
<path d="M395.0,515.0 C396.0,513.8 401.3,513.2 403.0,514.0 C404.7,514.8 406.0,518.8 405.0,520.0 C404.0,521.2 398.7,521.8 397.0,521.0 C395.3,520.2 394.0,516.2 395.0,515.0Z" fill="#a9cbea" stroke="#8db0c8" stroke-width=".6"/>
<path d="M402.0,527.0 C402.8,525.2 407.7,524.3 409.0,526.0 C410.3,527.7 410.8,535.2 410.0,537.0 C409.2,538.8 405.3,538.7 404.0,537.0 C402.7,535.3 401.2,528.8 402.0,527.0Z" fill="#a9cbea" stroke="#8db0c8" stroke-width=".6"/>
<path d="M376.0,546.0 C377.0,544.6 383.5,543.3 386.0,544.0 C388.5,544.7 392.0,548.6 391.0,550.0 C390.0,551.4 382.5,553.2 380.0,552.5 C377.5,551.8 375.0,547.4 376.0,546.0Z" fill="#a9cbea" stroke="#8db0c8" stroke-width=".6"/>
<path d="M311.0,347.0 C311.8,343.3 315.2,336.3 317.0,336.0 C318.8,335.7 319.3,343.8 322.0,345.0 C324.7,346.2 330.0,344.3 333.0,343.0 C336.0,341.7 337.2,337.7 340.0,337.0 C342.8,336.3 347.0,340.2 350.0,339.0 C353.0,337.8 355.0,331.3 358.0,330.0 C361.0,328.7 365.3,331.7 368.0,331.0 C370.7,330.3 371.8,326.7 374.0,326.0 C376.2,325.3 380.2,325.7 381.0,327.0 C381.8,328.3 380.8,331.8 379.0,334.0 C377.2,336.2 372.2,337.8 370.0,340.0 C367.8,342.2 368.3,345.3 366.0,347.0 C363.7,348.7 359.0,349.8 356.0,350.0 C353.0,350.2 350.7,347.0 348.0,348.0 C345.3,349.0 343.0,353.7 340.0,356.0 C337.0,358.3 333.7,360.5 330.0,362.0 C326.3,363.5 321.0,365.7 318.0,365.0 C315.0,364.3 313.2,361.0 312.0,358.0 C310.8,355.0 310.2,350.7 311.0,347.0Z" fill="#a9cbea" stroke="#8fb2d0" stroke-width=".6"/>
<path d="M311.0,397.0 C312.3,396.3 318.8,399.8 322.0,399.0 C325.2,398.2 328.0,394.3 330.0,392.0 C332.0,389.7 332.7,386.5 334.0,385.0 C335.3,383.5 337.2,381.8 338.0,383.0 C338.8,384.2 337.8,389.5 339.0,392.0 C340.2,394.5 343.7,395.3 345.0,398.0 C346.3,400.7 347.0,405.0 347.0,408.0 C347.0,411.0 346.5,415.0 345.0,416.0 C343.5,417.0 340.2,415.3 338.0,414.0 C335.8,412.7 334.7,409.2 332.0,408.0 C329.3,406.8 325.0,407.8 322.0,407.0 C319.0,406.2 315.8,404.7 314.0,403.0 C312.2,401.3 309.7,397.7 311.0,397.0Z" fill="#a9cbea" stroke="#8fb2d0" stroke-width=".6"/>
<path d="M226.0,437.0 C225.8,435.2 228.5,428.5 230.0,426.0 C231.5,423.5 234.0,421.5 235.0,422.0 C236.0,422.5 236.7,426.5 236.0,429.0 C235.3,431.5 232.7,435.7 231.0,437.0 C229.3,438.3 226.2,438.8 226.0,437.0Z" fill="#a9cbea" stroke="#8fb2d0" stroke-width=".6"/>
<path d="M661.0,234.0 C662.4,232.8 671.0,237.8 673.5,240.0 C676.0,242.2 673.1,247.1 676.0,247.5 C678.9,247.9 686.0,242.1 691.0,242.5 C696.0,242.9 705.2,248.3 706.0,250.0 C706.8,251.7 700.2,252.5 696.0,252.5 C691.8,252.5 685.6,250.0 681.0,250.0 C676.4,250.0 671.4,250.4 668.5,252.5 C665.6,254.6 666.8,259.2 663.5,262.5 C660.2,265.8 651.4,271.4 648.5,272.5 C645.6,273.6 643.9,271.5 646.0,269.0 C648.1,266.5 657.8,261.1 661.0,257.5 C664.2,253.9 665.0,251.4 665.0,247.5 C665.0,243.6 659.6,235.2 661.0,234.0Z" fill="#a9cbea" stroke="#8fb2d0" stroke-width=".6"/>
<path d="M565.0,307.5 C566.7,304.2 571.7,303.8 576.0,305.0 C580.3,306.2 589.3,312.5 591.0,315.0 C592.7,317.5 588.9,318.3 586.0,320.0 C583.1,321.7 576.4,322.5 573.5,325.0 C570.6,327.5 571.0,333.3 568.5,335.0 C566.0,336.7 558.9,336.7 558.5,335.0 C558.1,333.3 564.9,329.6 566.0,325.0 C567.1,320.4 563.3,310.8 565.0,307.5Z" fill="#a9cbea" stroke="#8fb2d0" stroke-width=".6"/>
<path d="M461.0,263.0 C461.3,261.2 464.5,260.3 466.0,261.0 C467.5,261.7 470.3,265.2 470.0,267.0 C469.7,268.8 465.5,272.7 464.0,272.0 C462.5,271.3 460.7,264.8 461.0,263.0Z" fill="#a9cbea" stroke="#8fb2d0" stroke-width=".6"/>
<path d="M803.5,282.0 C804.2,279.8 809.9,272.5 812.0,271.0 C814.1,269.5 816.7,270.8 816.0,273.0 C815.3,275.2 810.1,282.5 808.0,284.0 C805.9,285.5 802.8,284.2 803.5,282.0Z" fill="#a9cbea" stroke="#8fb2d0" stroke-width=".6"/>
<path d="M950.0,439.0 C950.7,437.9 956.0,436.0 958.0,436.0 C960.0,436.0 962.7,437.9 962.0,439.0 C961.3,440.1 956.0,442.5 954.0,442.5 C952.0,442.5 949.3,440.1 950.0,439.0Z" fill="#a9cbea" stroke="#8fb2d0" stroke-width=".6"/>
<path d="M853.5,704.0 C854.3,701.9 858.1,700.5 863.5,700.0 C868.9,699.5 879.8,700.3 886.0,701.0 C892.2,701.7 896.8,702.1 901.0,704.0 C905.2,705.9 907.7,710.7 911.0,712.5 C914.3,714.3 919.8,713.3 921.0,715.0 C922.2,716.7 920.2,720.0 918.5,722.5 C916.8,725.0 911.4,727.1 911.0,730.0 C910.6,732.9 916.4,736.7 916.0,740.0 C915.6,743.3 908.5,747.7 908.5,750.0 C908.5,752.3 913.5,751.9 916.0,754.0 C918.5,756.1 923.1,760.2 923.5,762.5 C923.9,764.8 921.8,766.9 918.5,767.5 C915.2,768.1 906.8,767.2 903.5,766.0 C900.2,764.8 900.6,760.2 898.5,760.0 C896.4,759.8 893.1,767.1 891.0,765.0 C888.9,762.9 887.7,752.9 886.0,747.5 C884.3,742.1 883.9,737.1 881.0,732.5 C878.1,727.9 872.2,723.3 868.5,720.0 C864.8,716.7 861.0,715.2 858.5,712.5 C856.0,709.8 852.7,706.1 853.5,704.0Z" fill="#a9cbea" stroke="#8fb2d0" stroke-width=".6"/>
<path d="M1040.0,590.0 C1038.5,583.0 1032.1,604.2 1031.0,610.0 C1029.9,615.8 1034.3,619.6 1033.5,625.0 C1032.7,630.4 1029.8,637.9 1026.0,642.5 C1022.2,647.1 1014.8,648.3 1011.0,652.5 C1007.2,656.7 1006.0,663.2 1003.5,667.5 C1001.0,671.8 998.1,674.6 996.0,678.0 C993.9,681.4 991.4,684.3 991.0,688.0 C990.6,691.7 991.8,695.1 993.5,700.0 C995.2,704.9 998.1,712.1 1001.0,717.5 C1003.9,722.9 1006.8,728.3 1011.0,732.5 C1015.2,736.7 1021.2,739.9 1026.0,742.5 C1030.8,745.1 1037.7,751.8 1040.0,748.0 C1042.3,744.2 1041.9,725.5 1040.0,720.0 C1038.1,714.5 1032.1,717.9 1028.5,715.0 C1024.9,712.1 1021.0,707.1 1018.5,702.5 C1016.0,697.9 1013.5,692.1 1013.5,687.5 C1013.5,682.9 1015.8,679.6 1018.5,675.0 C1021.2,670.4 1026.4,663.8 1030.0,660.0 C1033.6,656.2 1038.3,663.7 1040.0,652.0 C1041.7,640.3 1041.5,597.0 1040.0,590.0Z" fill="#a9cbea" stroke="#8fb2d0" stroke-width=".6"/>
<path d="M992.0,490.0 C993.1,488.3 997.2,491.2 1000.0,495.0 C1002.8,498.8 1005.4,508.2 1008.5,512.5 C1011.6,516.8 1013.2,519.1 1018.5,521.0 C1023.8,522.9 1036.4,522.0 1040.0,524.0 C1043.6,526.0 1043.2,531.8 1040.0,533.0 C1036.8,534.2 1026.7,531.5 1021.0,531.0 C1015.3,530.5 1009.2,532.2 1006.0,530.0 C1002.8,527.8 1004.1,521.7 1002.0,517.5 C999.9,513.3 995.2,509.6 993.5,505.0 C991.8,500.4 990.9,491.7 992.0,490.0Z" fill="#a9cbea" stroke="#8fb2d0" stroke-width=".6"/>
<path d="M588.5,811.0 C588.7,809.6 591.6,807.3 593.0,807.5 C594.4,807.7 597.2,810.6 597.0,812.0 C596.8,813.4 593.4,816.2 592.0,816.0 C590.6,815.8 588.3,812.4 588.5,811.0Z" fill="#a9cbea" stroke="#8fb2d0" stroke-width=".6"/>
<path d="M599.0,818.0 C599.3,816.6 602.7,813.8 604.0,814.0 C605.3,814.2 607.3,817.6 607.0,819.0 C606.7,820.4 603.3,822.7 602.0,822.5 C600.7,822.3 598.7,819.4 599.0,818.0Z" fill="#a9cbea" stroke="#8fb2d0" stroke-width=".6"/>
<path d="M737.0,780.0 C737.2,778.2 741.1,774.8 743.0,775.0 C744.9,775.2 748.7,779.2 748.5,781.0 C748.3,782.8 743.9,786.2 742.0,786.0 C740.1,785.8 736.8,781.8 737.0,780.0Z" fill="#a9cbea" stroke="#8fb2d0" stroke-width=".6"/>
<path d="M760.0,788.0 C760.5,785.9 765.2,782.3 767.0,782.5 C768.8,782.7 771.5,786.9 771.0,789.0 C770.5,791.1 765.8,795.2 764.0,795.0 C762.2,794.8 759.5,790.1 760.0,788.0Z" fill="#a9cbea" stroke="#8fb2d0" stroke-width=".6"/>
<path d="M478.5,833.0 C479.8,831.4 486.2,828.5 490.0,828.0 C493.8,827.5 500.7,828.7 501.0,830.0 C501.3,831.3 495.2,834.8 492.0,836.0 C488.8,837.2 484.2,838.0 482.0,837.5 C479.8,837.0 477.2,834.6 478.5,833.0Z" fill="#a9cbea" stroke="#8fb2d0" stroke-width=".6"/>
<path d="M672.0,451.0 C674.3,448.3 679.3,448.2 680.0,450.0 C680.7,451.8 677.8,458.7 676.0,462.0 C674.2,465.3 670.7,469.3 669.0,470.0 C667.3,470.7 665.5,469.2 666.0,466.0 C666.5,462.8 669.7,453.7 672.0,451.0Z" fill="#a9cbea"/>
<path d="M1037.0,291.0 C1035.2,292.1 1029.9,297.7 1026.0,297.5 C1022.1,297.3 1017.2,291.7 1013.5,290.0 C1009.8,288.3 1008.9,286.8 1003.5,287.5 C998.1,288.2 986.4,291.1 981.0,294.0 C975.6,296.9 974.8,300.2 971.0,305.0 C967.2,309.8 961.4,317.5 958.5,322.5 C955.6,327.5 954.9,330.8 953.5,335.0 C952.1,339.2 949.6,343.8 950.0,347.5 C950.4,351.2 956.2,354.6 956.0,357.5 C955.8,360.4 949.3,361.7 948.5,365.0 C947.7,368.3 949.8,373.3 951.0,377.5 C952.2,381.7 955.6,385.4 956.0,390.0 C956.4,394.6 951.8,401.2 953.5,405.0 C955.2,408.8 961.4,410.4 966.0,412.5 C970.6,414.6 978.5,414.2 981.0,417.5 C983.5,420.8 979.8,427.9 981.0,432.5 C982.2,437.1 987.3,441.8 988.5,445.0 C989.7,448.2 986.8,449.1 988.0,452.0 C989.2,454.9 995.1,458.7 996.0,462.5 C996.9,466.3 993.5,470.4 993.5,475.0 C993.5,479.6 995.6,487.5 996.0,490.0" fill="none" stroke="#a3c6e8" stroke-width="3.600" stroke-linejoin="round"/>
<path d="M228.0,225.0 C226.8,228.5 220.0,247.8 218.0,255.0 C216.0,262.2 212.8,281.5 211.0,287.0 C209.2,292.5 203.6,298.5 203.0,302.0 C202.4,305.5 202.7,313.7 206.0,317.0 C209.3,320.3 224.6,327.1 231.0,330.0 C237.4,332.9 256.1,336.8 261.0,342.0 C265.9,347.2 270.7,366.8 273.0,375.0 C275.3,383.2 279.8,403.2 281.0,412.0 C282.2,420.8 283.0,443.2 283.0,450.0 C283.0,456.8 281.2,465.9 281.0,470.0 C280.8,474.1 282.5,482.1 281.0,485.0 C279.5,487.9 272.0,493.2 268.5,495.0 C265.0,496.8 254.5,498.4 251.0,500.0 C247.5,501.6 240.0,507.9 238.5,509.0" fill="none" stroke="#686860" stroke-width="1.100" opacity=".9"/>
<path d="M103.0,225.0 C103.3,226.8 104.2,234.2 106.0,240.0 C107.8,245.8 116.0,267.8 118.0,275.0 C120.0,282.2 120.7,298.5 123.0,302.0 C125.3,305.5 140.0,302.3 138.0,305.0 C136.0,307.7 111.8,321.5 106.0,325.0 C100.2,328.5 92.1,332.1 88.0,335.0 C83.9,337.9 74.7,346.9 71.0,350.0 C67.3,353.1 57.8,360.6 56.0,362.0" fill="none" stroke="#686860" stroke-width="1.100" opacity=".9"/>
<path d="M138.0,305.0 C141.7,303.9 162.4,296.4 170.0,296.0 C177.6,295.6 199.2,301.3 203.0,302.0" fill="none" stroke="#686860" stroke-width="1.100" opacity=".9"/>
<path d="M56.0,300.0 C57.4,301.2 66.4,304.8 68.0,310.0 C69.6,315.2 69.8,340.9 70.0,345.0" fill="none" stroke="#686860" stroke-width="1.100" opacity=".9"/>
<path d="M578.5,225.0 C578.8,227.9 579.5,244.2 581.0,250.0 C582.5,255.8 587.5,269.5 591.0,275.0 C594.5,280.5 606.9,293.1 611.0,297.5 C615.1,301.9 621.3,310.8 626.0,312.5 C630.7,314.2 646.0,311.6 651.0,312.5 C656.0,313.4 665.6,317.7 668.5,320.0 C671.4,322.3 675.1,326.1 676.0,332.5 C676.9,338.9 676.9,367.7 676.0,375.0 C675.1,382.3 669.9,390.9 668.0,395.0 C666.1,399.1 660.9,408.2 660.0,410.0" fill="none" stroke="#686860" stroke-width="1.100" opacity=".9"/>
<path d="M676.0,332.5 C678.3,333.1 692.2,338.4 696.0,337.5 C699.8,336.6 704.4,327.3 708.5,325.0 C712.6,322.7 727.8,316.0 731.0,317.5 C734.2,319.0 734.5,331.1 736.0,337.5 C737.5,343.9 743.3,365.2 743.5,372.5 C743.7,379.8 739.5,393.3 738.0,400.0 C736.5,406.7 734.7,424.2 731.0,430.0 C727.3,435.8 708.9,447.7 706.0,450.0" fill="none" stroke="#686860" stroke-width="1.100" opacity=".9"/>
<path d="M528.5,225.0 C525.9,227.3 509.5,239.2 506.0,245.0 C502.5,250.8 499.7,267.7 498.5,275.0 C497.3,282.3 497.5,300.2 496.0,307.5 C494.5,314.8 486.9,332.0 486.0,337.5 C485.1,343.0 485.6,352.4 488.5,355.0 C491.4,357.6 507.8,357.7 511.0,360.0 C514.2,362.3 515.7,367.4 516.0,375.0 C516.3,382.6 514.7,416.5 513.5,425.0 C512.3,433.5 506.9,445.3 506.0,448.0" fill="none" stroke="#686860" stroke-width="1.100" opacity=".9"/>
<path d="M856.0,320.0 C852.5,320.0 831.8,317.4 826.0,320.0 C820.2,322.6 810.7,337.2 806.0,342.5 C801.3,347.8 793.3,361.5 786.0,365.0 C778.7,368.5 748.5,371.6 743.5,372.5" fill="none" stroke="#686860" stroke-width="1.100" opacity=".9"/>
<path d="M851.0,225.0 C851.3,227.3 852.3,239.8 853.5,245.0 C854.7,250.2 859.2,264.8 861.0,270.0 C862.8,275.2 866.8,286.5 868.5,290.0 C870.2,293.5 875.2,296.5 876.0,300.0 C876.8,303.5 877.3,317.7 875.0,320.0 C872.7,322.3 858.2,320.0 856.0,320.0" fill="none" stroke="#686860" stroke-width="1.100" opacity=".9"/>
<path d="M876.0,299.0 C879.5,299.1 898.1,300.0 906.0,300.0 C913.9,300.0 937.1,299.7 943.5,299.0 C949.9,298.3 958.4,295.3 961.0,294.0 C963.6,292.7 964.8,287.0 966.0,288.0 C967.2,289.0 970.4,300.8 971.0,302.5" fill="none" stroke="#686860" stroke-width="1.100" opacity=".9"/>
<path d="M511.0,360.0 C514.4,362.9 532.0,380.9 540.0,385.0 C548.0,389.1 571.8,393.2 580.0,395.0 C588.2,396.8 603.0,395.9 610.0,400.0 C617.0,404.1 634.2,425.3 640.0,430.0 C645.8,434.7 657.3,434.5 660.0,440.0 C662.7,445.5 663.1,473.1 663.5,477.5" fill="none" stroke="#686860" stroke-width="1.100" opacity=".9"/>
<path d="M706.0,450.0 C704.1,451.8 692.9,461.5 690.0,465.0 C687.1,468.5 682.0,478.2 681.0,480.0" fill="none" stroke="#686860" stroke-width="1.100" opacity=".9"/>
<path d="M746.0,450.0 C747.2,451.2 751.9,458.5 756.0,460.0 C760.1,461.5 775.8,460.8 781.0,462.5 C786.2,464.2 797.2,473.2 801.0,475.0 C804.8,476.8 811.5,478.7 813.5,477.5 C815.5,476.3 815.6,467.3 818.5,465.0 C821.4,462.7 831.8,458.1 838.5,457.5 C845.2,456.9 869.9,458.8 876.0,460.0 C882.1,461.2 888.1,464.9 891.0,467.5 C893.9,470.1 899.2,478.7 901.0,482.5 C902.8,486.3 905.4,498.0 906.0,500.0" fill="none" stroke="#686860" stroke-width="1.100" opacity=".9"/>
<path d="M673.5,644.0 C675.5,644.4 687.2,645.3 691.0,647.5 C694.8,649.7 703.7,659.3 706.0,662.5 C708.3,665.7 709.5,672.1 711.0,675.0 C712.5,677.9 719.7,683.7 718.5,687.5 C717.3,691.3 705.1,702.8 701.0,707.5 C696.9,712.2 681.8,723.6 683.5,727.5 C685.2,731.4 710.2,739.4 716.0,741.0 C721.8,742.6 730.3,737.9 733.5,741.0 C736.7,744.1 741.5,764.1 743.5,767.5 C745.5,770.9 749.0,767.4 751.0,770.0 C753.0,772.6 759.5,783.6 761.0,790.0 C762.5,796.4 763.2,817.8 763.5,825.0 C763.8,832.2 763.5,848.9 763.5,852.0" fill="none" stroke="#686860" stroke-width="1.100" opacity=".9"/>
<path d="M538.5,780.0 C539.7,782.0 543.8,794.9 548.5,797.5 C553.2,800.1 574.8,800.5 578.5,802.5 C582.2,804.5 580.3,812.1 580.0,815.0 C579.7,817.9 574.1,826.2 576.0,827.5 C577.9,828.8 592.2,825.7 596.0,826.0 C599.8,826.3 606.6,827.0 608.5,830.0 C610.4,833.0 611.6,849.4 612.0,852.0" fill="none" stroke="#686860" stroke-width="1.100" opacity=".9"/>
<path d="M576.0,827.5 L575.0,852.0" fill="none" stroke="#686860" stroke-width="1.100" opacity=".9"/>
<path d="M1031.0,745.0 C1015.8,754.9 919.8,817.5 901.0,830.0 C882.2,842.5 873.6,849.4 870.0,852.0" fill="none" stroke="#686860" stroke-width="1.100" opacity=".9"/>
<path d="M56.0,585.0 C58.7,581.7 70.7,566.0 76.0,560.0 C81.3,554.0 90.7,545.0 96.0,540.0 C101.3,535.0 112.7,526.5 116.0,522.5 C119.3,518.5 118.0,514.0 121.0,510.0 C124.0,506.0 134.5,496.8 138.5,492.5 C142.5,488.2 147.0,481.2 151.0,477.5 C155.0,473.8 163.8,468.7 168.5,465.0 C173.2,461.3 181.8,453.3 186.0,450.0 C190.2,446.7 192.7,443.3 200.0,440.0 C207.3,436.7 230.2,428.1 241.0,425.0 C251.8,421.9 268.1,418.2 281.0,417.0 C293.9,415.8 324.0,415.7 338.0,416.0 C352.0,416.3 375.1,417.9 386.0,419.0 C396.9,420.1 410.7,422.5 420.0,424.0 C429.3,425.5 444.5,430.9 456.0,430.0 C467.5,429.1 496.0,421.5 506.0,417.5 C516.0,413.5 523.7,403.0 531.0,400.0 C538.3,397.0 555.1,397.0 561.0,395.0 C566.9,393.0 571.0,388.0 575.0,385.0 C579.0,382.0 587.5,375.3 591.0,372.5 C594.5,369.7 594.3,364.7 601.0,364.0 C607.7,363.3 631.7,366.0 641.0,367.5 C650.3,369.0 667.0,374.0 671.0,375.0" fill="none" stroke="#c4826c" stroke-width="2.700" stroke-linejoin="round" opacity=".9"/><path d="M56.0,585.0 C58.7,581.7 70.7,566.0 76.0,560.0 C81.3,554.0 90.7,545.0 96.0,540.0 C101.3,535.0 112.7,526.5 116.0,522.5 C119.3,518.5 118.0,514.0 121.0,510.0 C124.0,506.0 134.5,496.8 138.5,492.5 C142.5,488.2 147.0,481.2 151.0,477.5 C155.0,473.8 163.8,468.7 168.5,465.0 C173.2,461.3 181.8,453.3 186.0,450.0 C190.2,446.7 192.7,443.3 200.0,440.0 C207.3,436.7 230.2,428.1 241.0,425.0 C251.8,421.9 268.1,418.2 281.0,417.0 C293.9,415.8 324.0,415.7 338.0,416.0 C352.0,416.3 375.1,417.9 386.0,419.0 C396.9,420.1 410.7,422.5 420.0,424.0 C429.3,425.5 444.5,430.9 456.0,430.0 C467.5,429.1 496.0,421.5 506.0,417.5 C516.0,413.5 523.7,403.0 531.0,400.0 C538.3,397.0 555.1,397.0 561.0,395.0 C566.9,393.0 571.0,388.0 575.0,385.0 C579.0,382.0 587.5,375.3 591.0,372.5 C594.5,369.7 594.3,364.7 601.0,364.0 C607.7,363.3 631.7,366.0 641.0,367.5 C650.3,369.0 667.0,374.0 671.0,375.0" fill="none" stroke="#ecdcbc" stroke-width="1.100" stroke-linejoin="round"/>
<path d="M100.0,225.0 C101.7,227.7 107.5,240.3 113.0,245.0 C118.5,249.7 132.6,257.3 141.0,260.0 C149.4,262.7 166.4,263.5 176.0,265.0 C185.6,266.5 208.1,270.2 213.0,271.0" fill="none" stroke="#c4826c" stroke-width="2.700" stroke-linejoin="round" opacity=".9"/><path d="M100.0,225.0 C101.7,227.7 107.5,240.3 113.0,245.0 C118.5,249.7 132.6,257.3 141.0,260.0 C149.4,262.7 166.4,263.5 176.0,265.0 C185.6,266.5 208.1,270.2 213.0,271.0" fill="none" stroke="#ecdcbc" stroke-width="1.100" stroke-linejoin="round"/>
<path d="M145.0,225.0 C145.4,227.0 148.5,235.7 148.0,240.0 C147.5,244.3 141.9,254.7 141.0,257.0" fill="none" stroke="#c4826c" stroke-width="2.700" stroke-linejoin="round" opacity=".9"/><path d="M145.0,225.0 C145.4,227.0 148.5,235.7 148.0,240.0 C147.5,244.3 141.9,254.7 141.0,257.0" fill="none" stroke="#ecdcbc" stroke-width="1.100" stroke-linejoin="round"/>
<path d="M671.0,375.0 C677.0,372.3 707.0,358.0 716.0,355.0 C725.0,352.0 731.2,354.5 738.5,352.5 C745.8,350.5 764.0,342.0 771.0,340.0 C778.0,338.0 788.3,337.8 791.0,337.5" fill="none" stroke="#c4826c" stroke-width="2.700" stroke-linejoin="round" opacity=".9"/><path d="M671.0,375.0 C677.0,372.3 707.0,358.0 716.0,355.0 C725.0,352.0 731.2,354.5 738.5,352.5 C745.8,350.5 764.0,342.0 771.0,340.0 C778.0,338.0 788.3,337.8 791.0,337.5" fill="none" stroke="#ecdcbc" stroke-width="1.100" stroke-linejoin="round"/>
<path d="M671.0,375.0 C674.3,374.7 689.7,372.5 696.0,372.5 C702.3,372.5 712.2,375.0 718.5,375.0 C724.8,375.0 735.2,373.2 743.5,372.5 C751.8,371.8 772.7,370.0 781.0,370.0 C789.3,370.0 799.3,371.2 806.0,372.5 C812.7,373.8 825.0,376.7 831.0,380.0 C837.0,383.3 848.3,395.2 851.0,397.5" fill="none" stroke="#c4826c" stroke-width="2.700" stroke-linejoin="round" opacity=".9"/><path d="M671.0,375.0 C674.3,374.7 689.7,372.5 696.0,372.5 C702.3,372.5 712.2,375.0 718.5,375.0 C724.8,375.0 735.2,373.2 743.5,372.5 C751.8,371.8 772.7,370.0 781.0,370.0 C789.3,370.0 799.3,371.2 806.0,372.5 C812.7,373.8 825.0,376.7 831.0,380.0 C837.0,383.3 848.3,395.2 851.0,397.5" fill="none" stroke="#ecdcbc" stroke-width="1.100" stroke-linejoin="round"/>
<path d="M871.0,225.0 C870.3,227.7 868.7,239.3 866.0,245.0 C863.3,250.7 857.3,263.5 851.0,267.5 C844.7,271.5 826.8,271.7 818.5,275.0 C810.2,278.3 793.8,288.2 788.5,292.5 C783.2,296.8 779.2,302.8 778.5,307.5 C777.8,312.2 781.2,322.8 783.5,327.5 C785.8,332.2 792.3,338.5 796.0,342.5 C799.7,346.5 807.0,353.5 811.0,357.5 C815.0,361.5 822.0,368.8 826.0,372.5 C830.0,376.2 839.3,380.7 841.0,385.0 C842.7,389.3 838.8,402.3 838.5,405.0" fill="none" stroke="#c4826c" stroke-width="2.700" stroke-linejoin="round" opacity=".9"/><path d="M871.0,225.0 C870.3,227.7 868.7,239.3 866.0,245.0 C863.3,250.7 857.3,263.5 851.0,267.5 C844.7,271.5 826.8,271.7 818.5,275.0 C810.2,278.3 793.8,288.2 788.5,292.5 C783.2,296.8 779.2,302.8 778.5,307.5 C777.8,312.2 781.2,322.8 783.5,327.5 C785.8,332.2 792.3,338.5 796.0,342.5 C799.7,346.5 807.0,353.5 811.0,357.5 C815.0,361.5 822.0,368.8 826.0,372.5 C830.0,376.2 839.3,380.7 841.0,385.0 C842.7,389.3 838.8,402.3 838.5,405.0" fill="none" stroke="#ecdcbc" stroke-width="1.100" stroke-linejoin="round"/>
<path d="M838.5,405.0 C840.8,404.0 851.0,396.8 856.0,397.5 C861.0,398.2 870.7,406.7 876.0,410.0 C881.3,413.3 891.3,419.8 896.0,422.5 C900.7,425.2 906.3,428.9 911.0,430.0 C915.7,431.1 925.0,432.0 931.0,431.0 C937.0,430.0 949.3,424.3 956.0,422.5 C962.7,420.7 974.3,419.0 981.0,417.5 C987.7,416.0 998.5,412.1 1006.0,411.0 C1013.5,409.9 1032.9,409.7 1037.0,409.5" fill="none" stroke="#c4826c" stroke-width="2.700" stroke-linejoin="round" opacity=".9"/><path d="M838.5,405.0 C840.8,404.0 851.0,396.8 856.0,397.5 C861.0,398.2 870.7,406.7 876.0,410.0 C881.3,413.3 891.3,419.8 896.0,422.5 C900.7,425.2 906.3,428.9 911.0,430.0 C915.7,431.1 925.0,432.0 931.0,431.0 C937.0,430.0 949.3,424.3 956.0,422.5 C962.7,420.7 974.3,419.0 981.0,417.5 C987.7,416.0 998.5,412.1 1006.0,411.0 C1013.5,409.9 1032.9,409.7 1037.0,409.5" fill="none" stroke="#ecdcbc" stroke-width="1.100" stroke-linejoin="round"/>
<path d="M838.5,405.0 C837.5,407.7 831.3,420.3 831.0,425.0 C830.7,429.7 835.0,436.7 836.0,440.0 C837.0,443.3 839.2,447.0 838.5,450.0 C837.8,453.0 833.0,458.5 831.0,462.5 C829.0,466.5 826.8,474.3 823.5,480.0 C820.2,485.7 810.3,500.7 806.0,505.0 C801.7,509.3 795.4,511.6 791.0,512.5 C786.6,513.4 775.4,512.1 773.0,512.0" fill="none" stroke="#c4826c" stroke-width="2.700" stroke-linejoin="round" opacity=".9"/><path d="M838.5,405.0 C837.5,407.7 831.3,420.3 831.0,425.0 C830.7,429.7 835.0,436.7 836.0,440.0 C837.0,443.3 839.2,447.0 838.5,450.0 C837.8,453.0 833.0,458.5 831.0,462.5 C829.0,466.5 826.8,474.3 823.5,480.0 C820.2,485.7 810.3,500.7 806.0,505.0 C801.7,509.3 795.4,511.6 791.0,512.5 C786.6,513.4 775.4,512.1 773.0,512.0" fill="none" stroke="#ecdcbc" stroke-width="1.100" stroke-linejoin="round"/>
<path d="M773.0,512.0 C772.4,514.7 770.8,527.4 768.5,532.5 C766.2,537.6 758.9,546.3 756.0,550.0 C753.1,553.7 747.7,554.7 747.0,560.0 C746.3,565.3 750.8,583.0 751.0,590.0 C751.2,597.0 747.8,607.2 748.5,612.5 C749.2,617.8 753.3,625.0 756.0,630.0 C758.7,635.0 765.3,645.2 768.5,650.0 C771.7,654.8 778.5,663.9 780.0,666.0" fill="none" stroke="#c4826c" stroke-width="2.700" stroke-linejoin="round" opacity=".9"/><path d="M773.0,512.0 C772.4,514.7 770.8,527.4 768.5,532.5 C766.2,537.6 758.9,546.3 756.0,550.0 C753.1,553.7 747.7,554.7 747.0,560.0 C746.3,565.3 750.8,583.0 751.0,590.0 C751.2,597.0 747.8,607.2 748.5,612.5 C749.2,617.8 753.3,625.0 756.0,630.0 C758.7,635.0 765.3,645.2 768.5,650.0 C771.7,654.8 778.5,663.9 780.0,666.0" fill="none" stroke="#ecdcbc" stroke-width="1.100" stroke-linejoin="round"/>
<path d="M780.0,666.0 C777.8,667.6 767.4,675.1 763.5,678.0 C759.6,680.9 754.7,682.9 751.0,687.5 C747.3,692.1 740.3,705.5 736.0,712.5 C731.7,719.5 723.2,732.7 718.5,740.0 C713.8,747.3 705.3,760.2 701.0,767.5 C696.7,774.8 688.7,788.7 686.0,795.0 C683.3,801.3 683.4,809.7 681.0,815.0 C678.6,820.3 671.5,830.1 668.0,835.0 C664.5,839.9 656.7,849.7 655.0,852.0" fill="none" stroke="#c4826c" stroke-width="2.700" stroke-linejoin="round" opacity=".9"/><path d="M780.0,666.0 C777.8,667.6 767.4,675.1 763.5,678.0 C759.6,680.9 754.7,682.9 751.0,687.5 C747.3,692.1 740.3,705.5 736.0,712.5 C731.7,719.5 723.2,732.7 718.5,740.0 C713.8,747.3 705.3,760.2 701.0,767.5 C696.7,774.8 688.7,788.7 686.0,795.0 C683.3,801.3 683.4,809.7 681.0,815.0 C678.6,820.3 671.5,830.1 668.0,835.0 C664.5,839.9 656.7,849.7 655.0,852.0" fill="none" stroke="#ecdcbc" stroke-width="1.100" stroke-linejoin="round"/>
<path d="M780.0,666.0 C781.8,666.7 789.0,671.1 793.5,671.0 C798.0,670.9 808.5,667.5 813.5,665.0 C818.5,662.5 826.0,656.8 831.0,652.5 C836.0,648.2 845.8,637.2 851.0,632.5 C856.2,627.8 864.0,621.5 870.0,617.5 C876.0,613.5 889.9,606.2 896.0,602.5 C902.1,598.8 910.7,593.0 916.0,590.0 C921.3,587.0 930.7,582.0 936.0,580.0 C941.3,578.0 950.5,576.3 956.0,575.0 C961.5,573.7 972.3,571.3 977.0,570.0 C981.7,568.7 986.1,566.3 991.0,565.0 C995.9,563.7 1008.8,562.7 1013.5,560.0 C1018.2,557.3 1022.9,548.2 1026.0,545.0 C1029.1,541.8 1035.5,537.2 1037.0,536.0" fill="none" stroke="#c4826c" stroke-width="2.700" stroke-linejoin="round" opacity=".9"/><path d="M780.0,666.0 C781.8,666.7 789.0,671.1 793.5,671.0 C798.0,670.9 808.5,667.5 813.5,665.0 C818.5,662.5 826.0,656.8 831.0,652.5 C836.0,648.2 845.8,637.2 851.0,632.5 C856.2,627.8 864.0,621.5 870.0,617.5 C876.0,613.5 889.9,606.2 896.0,602.5 C902.1,598.8 910.7,593.0 916.0,590.0 C921.3,587.0 930.7,582.0 936.0,580.0 C941.3,578.0 950.5,576.3 956.0,575.0 C961.5,573.7 972.3,571.3 977.0,570.0 C981.7,568.7 986.1,566.3 991.0,565.0 C995.9,563.7 1008.8,562.7 1013.5,560.0 C1018.2,557.3 1022.9,548.2 1026.0,545.0 C1029.1,541.8 1035.5,537.2 1037.0,536.0" fill="none" stroke="#ecdcbc" stroke-width="1.100" stroke-linejoin="round"/>
<path d="M793.5,671.0 C798.5,671.0 819.3,670.1 831.0,671.0 C842.7,671.9 871.0,676.6 881.0,677.5 C891.0,678.4 899.3,676.2 906.0,677.5 C912.7,678.8 922.7,684.5 931.0,687.5 C939.3,690.5 961.8,696.0 968.5,700.0 C975.2,704.0 977.3,712.2 981.0,717.5 C984.7,722.8 991.3,735.0 996.0,740.0 C1000.7,745.0 1010.5,750.2 1016.0,755.0 C1021.5,759.8 1034.2,773.2 1037.0,776.0" fill="none" stroke="#c4826c" stroke-width="2.700" stroke-linejoin="round" opacity=".9"/><path d="M793.5,671.0 C798.5,671.0 819.3,670.1 831.0,671.0 C842.7,671.9 871.0,676.6 881.0,677.5 C891.0,678.4 899.3,676.2 906.0,677.5 C912.7,678.8 922.7,684.5 931.0,687.5 C939.3,690.5 961.8,696.0 968.5,700.0 C975.2,704.0 977.3,712.2 981.0,717.5 C984.7,722.8 991.3,735.0 996.0,740.0 C1000.7,745.0 1010.5,750.2 1016.0,755.0 C1021.5,759.8 1034.2,773.2 1037.0,776.0" fill="none" stroke="#ecdcbc" stroke-width="1.100" stroke-linejoin="round"/>
<ellipse cx="333" cy="428" rx="15" ry="6" fill="#ecd99a" opacity=".75"/>
<ellipse cx="787" cy="662" rx="11" ry="9" fill="#ecd99a" opacity=".75"/>
<ellipse cx="846" cy="402" rx="8" ry="5" fill="#ecd99a" opacity=".75"/>
<ellipse cx="240" cy="447" rx="6" ry="4" fill="#ecd99a" opacity=".75"/>
<path d="M481.0,748.5 L488.5,747.0 L499.0,745.6 L505.6,750.0 L507.8,759.0 L514.4,765.6 L527.8,767.8 L538.5,778.0 L543.5,767.5 L545.6,755.0 L554.4,743.3 L565.6,739.0 L572.2,730.0 L574.4,725.6 L585.6,729.0 L592.2,724.0 L596.5,712.0 L596.0,700.0 L593.5,690.0 L596.7,681.0 L594.4,670.0 L598.0,662.0 L606.0,660.0 L621.0,657.5 L636.0,655.0 L656.0,657.5 L671.0,655.0 L668.5,645.0 L663.5,630.0 L651.0,625.0 L648.5,612.5 L638.5,600.0 L633.5,580.0 L641.0,567.5 L642.0,550.0 L643.5,527.5 L653.5,512.5 L656.0,492.5 L663.5,477.5 L681.0,480.0 L693.5,487.5 L706.0,490.0 L721.0,491.0 L733.5,495.0 L746.0,502.5 L753.5,507.5 L752.0,522.5 L761.0,533.0 L768.5,535.0 L771.0,526.0 L781.0,521.5 L789.0,528.0 L806.0,526.0 L831.0,528.0 L851.0,532.5 L861.0,532.5 L866.0,525.0 L881.0,515.0 L896.0,507.5 L906.0,500.0 L916.0,502.5 L931.0,499.0 L946.0,492.5 L961.0,485.0 L976.0,480.0 L991.0,475.0 L996.0,467.5 L1011.0,462.5 L1021.0,457.5 L1037.0,454.0" fill="none" stroke="#737371" stroke-width="3.400" stroke-linejoin="round"/>
<circle cx="457" cy="288" r="3.300" fill="#111"/>
<circle cx="340" cy="427" r="3.300" fill="#111"/>
<circle cx="233" cy="451" r="3.300" fill="#111"/>
<circle cx="457" cy="415.5" r="3.300" fill="#111"/>
<circle cx="169" cy="485.5" r="3.300" fill="#111"/>
<circle cx="728" cy="248" r="3.300" fill="#111"/>
<circle cx="563" cy="402.5" r="3.300" fill="#111"/>
<circle cx="838.5" cy="405" r="3.300" fill="#111"/>
<circle cx="982" cy="418" r="3.300" fill="#111"/>
<circle cx="773" cy="512" r="3.300" fill="#111"/>
<circle cx="543.5" cy="552" r="3.300" fill="#111"/>
<circle cx="542.5" cy="666.5" r="3.300" fill="#111"/>
<circle cx="780" cy="666" r="3.300" fill="#111"/>
<circle cx="870" cy="616" r="3.300" fill="#111"/>
<circle cx="977" cy="569.5" r="3.300" fill="#111"/>
<circle cx="656" cy="749" r="3.300" fill="#111"/>
<circle cx="835.5" cy="704" r="3.300" fill="#111"/>
<text x="395" y="297" textLength="53" lengthAdjust="spacing" font-family='"Liberation Sans", sans-serif' font-size="17" font-weight="400" fill="#1a1a1a" stroke="#1a1a1a" stroke-width=".3">Kozan</text>
<text x="265" y="439" textLength="66" lengthAdjust="spacing" font-family='"Liberation Sans", sans-serif' font-size="24" font-weight="400" fill="#1a1a1a" stroke="#1a1a1a" stroke-width=".55">Adana</text>
<text x="181" y="444" textLength="52" lengthAdjust="spacing" font-family='"Liberation Sans", sans-serif' font-size="17" font-weight="400" fill="#1a1a1a" stroke="#1a1a1a" stroke-width=".3">Tarsus</text>
<text x="385" y="428" textLength="63" lengthAdjust="spacing" font-family='"Liberation Sans", sans-serif' font-size="17" font-weight="400" fill="#1a1a1a" stroke="#1a1a1a" stroke-width=".3">Ceyhan</text>
<text x="91" y="502" textLength="71" lengthAdjust="spacing" font-family='"Liberation Sans", sans-serif' font-size="22.5" font-weight="400" fill="#1a1a1a" stroke="#1a1a1a" stroke-width=".800">Mersin</text>
<text x="675.5" y="264" textLength="51.5" lengthAdjust="spacing" font-family='"Liberation Sans", sans-serif' font-size="17" font-weight="400" fill="#1a1a1a" stroke="#1a1a1a" stroke-width=".3">Maras</text>
<text x="557" y="397" textLength="85" lengthAdjust="spacing" font-family='"Liberation Sans", sans-serif' font-size="17" font-weight="400" fill="#1a1a1a" stroke="#1a1a1a" stroke-width=".3">Osmaniye</text>
<text x="728.5" y="423" textLength="105" lengthAdjust="spacing" font-family='"Liberation Sans", sans-serif' font-size="22.5" font-weight="400" fill="#1a1a1a" stroke="#1a1a1a" stroke-width=".800">Gaziantep</text>
<text x="968.5" y="411" textLength="57.5" lengthAdjust="spacing" font-family='"Liberation Sans", sans-serif' font-size="17" font-weight="400" fill="#1a1a1a" stroke="#1a1a1a" stroke-width=".3">Birecik</text>
<text x="774" y="505.5" textLength="36" lengthAdjust="spacing" font-family='"Liberation Sans", sans-serif' font-size="17" font-weight="400" fill="#1a1a1a" stroke="#1a1a1a" stroke-width=".3">Kilis</text>
<text x="532" y="546" textLength="95" lengthAdjust="spacing" font-family='"Liberation Sans", sans-serif' font-size="17" font-weight="400" fill="#1a1a1a" stroke="#1a1a1a" stroke-width=".3">Iskenderun</text>
<text x="473.5" y="688" textLength="65.5" lengthAdjust="spacing" font-family='"Liberation Sans", sans-serif' font-size="17" font-weight="400" fill="#1a1a1a" stroke="#1a1a1a" stroke-width=".3">Antioch</text>
<text x="781" y="652" textLength="80" lengthAdjust="spacing" font-family='"Liberation Sans", sans-serif' font-size="24" font-weight="400" fill="#1a1a1a" stroke="#1a1a1a" stroke-width=".55">Aleppo</text>
<text x="875.5" y="611" textLength="53" lengthAdjust="spacing" font-family='"Liberation Sans", sans-serif' font-size="17" font-weight="400" fill="#1a1a1a" stroke="#1a1a1a" stroke-width=".3">Al Bab</text>
<text x="978.5" y="591" textLength="56.5" lengthAdjust="spacing" font-family='"Liberation Sans", sans-serif' font-size="17" font-weight="400" fill="#1a1a1a" stroke="#1a1a1a" stroke-width=".3">Manbij</text>
<text x="842" y="700" textLength="86.5" lengthAdjust="spacing" font-family='"Liberation Sans", sans-serif' font-size="17" font-weight="400" fill="#1a1a1a" stroke="#1a1a1a" stroke-width=".3">As Safirah</text>
<text x="661.5" y="766" textLength="37" lengthAdjust="spacing" font-family='"Liberation Sans", sans-serif' font-size="17" font-weight="400" fill="#1a1a1a" stroke="#1a1a1a" stroke-width=".3">Idlib</text>
<text x="1021" y="797" textLength="14" lengthAdjust="spacing" font-family='"Liberation Sans", sans-serif' font-size="17" font-weight="700" fill="#1a1a1a" >M</text>
<text x="54" y="614" textLength="6" lengthAdjust="spacing" font-family='"Liberation Sans", sans-serif' font-size="17" font-weight="400" fill="#1a1a1a" >e</text>
<text x="500" y="332" textLength="125" lengthAdjust="spacing" font-family='"Liberation Serif", serif' font-size="21.5" font-weight="400" fill="#2a2a2a" >OSMANIYE</text>
<text x="795" y="395" textLength="131" lengthAdjust="spacing" font-family='"Liberation Serif", serif' font-size="21" font-weight="400" fill="#2a2a2a" >GAZIANTEP</text>
<text x="810.5" y="524" textLength="58" lengthAdjust="spacing" font-family='"Liberation Serif", serif' font-size="23" font-weight="400" fill="#2a2a2a" >KILIS</text>
<text x="483" y="616.5" textLength="71.5" lengthAdjust="spacing" font-family='"Liberation Serif", serif' font-size="20.5" font-weight="400" fill="#3a3a30" >HATAY</text>
<text x="793" y="792" textLength="77.5" lengthAdjust="spacing" font-family='"Liberation Serif", serif' font-size="22" font-weight="400" fill="#2a2a2a" >HALAB</text>
<text x="505" y="829" textLength="21" lengthAdjust="spacing" font-family='"Liberation Serif", serif' font-size="17" font-weight="400" fill="#2a2a2a" >AL</text>
<text x="460" y="847.5" textLength="112" lengthAdjust="spacing" font-family='"Liberation Serif", serif' font-size="17" font-weight="400" fill="#2a2a2a" >LADHIQIYAH</text>
<text x="443" y="529" textLength="70" lengthAdjust="spacing" font-family='"Liberation Sans", sans-serif' font-size="17.5" font-weight="400" fill="#46507c" font-style="italic">Gulf of</text>
<text x="427" y="550" textLength="100" lengthAdjust="spacing" font-family='"Liberation Sans", sans-serif' font-size="17.5" font-weight="400" fill="#46507c" font-style="italic">Alexandria</text>
<text x="197" y="256" font-family='"Liberation Sans", sans-serif' font-size="19" fill="#2a2a2a" text-anchor="middle" transform="rotate(-11 197 256)" dy="6.500">I</text>
<text x="160" y="315" font-family='"Liberation Sans", sans-serif' font-size="19" fill="#2a2a2a" text-anchor="middle" transform="rotate(-38 160 315)" dy="6.500">I</text>
<text x="128.5" y="350" font-family='"Liberation Sans", sans-serif' font-size="19" fill="#2a2a2a" text-anchor="middle" transform="rotate(-33 128.5 350)" dy="6.500">R</text>
<text x="95" y="384" font-family='"Liberation Sans", sans-serif' font-size="19" fill="#2a2a2a" text-anchor="middle" transform="rotate(-28 95 384)" dy="6.500">A</text>
<text x="55" y="422" font-family='"Liberation Sans", sans-serif' font-size="19" fill="#2a2a2a" text-anchor="middle" transform="rotate(-25 55 422)" dy="6.500">L</text>
<circle cx="546" cy="481" r="145.500" fill="#ff9110" fill-opacity=".27" stroke="#f5962a" stroke-width="3"/>
<circle cx="507.700" cy="658.800" r="83" fill="#ffe23c" fill-opacity=".24" stroke="#f7df5c" stroke-width="3"/>
<linearGradient id="mpO" x1="0" y1="0" x2="0" y2="1"><stop offset="0" stop-color="#ff9510"/><stop offset=".62" stop-color="#f98c08"/><stop offset=".9" stop-color="#5d4a14"/><stop offset="1" stop-color="#1a1408"/></linearGradient>
<g transform="translate(547 481.5)"><path d="M0,0 L-1,-4.500 C-1.500,-8.500 -4,-10.500 -6.300,-13.200 A8,8 0 1 1 6.300,-13.200 C4,-10.500 1.500,-8.500 1,-4.500 Z" fill="url(#mpO)" stroke="#6a4512" stroke-width="1"/></g>
<linearGradient id="mpY" x1="0" y1="0" x2="0" y2="1"><stop offset="0" stop-color="#fdf060"/><stop offset=".62" stop-color="#f7e84a"/><stop offset=".9" stop-color="#5d4a14"/><stop offset="1" stop-color="#1a1408"/></linearGradient>
<g transform="translate(507.8 658)"><path d="M0,0 L-1,-4.500 C-1.500,-8.500 -4,-10.500 -6.300,-13.200 A8,8 0 1 1 6.300,-13.200 C4,-10.500 1.500,-8.500 1,-4.500 Z" fill="url(#mpY)" stroke="#75702a" stroke-width="1"/></g>
<rect x="69.400" y="238.200" width="42.800" height="83" rx="6" fill="none" stroke="#000" stroke-opacity=".22" stroke-width="2.600"/><rect x="70.700" y="239.500" width="40.200" height="80.500" rx="4.500" fill="#fff"/>
<path d="M71,279.500H111" stroke="#ccc" stroke-width="1"/>
<path d="M83.500,261.500H98.500M91,254V269" stroke="#111" stroke-width="2.800"/><path d="M84,300.500H98" stroke="#111" stroke-width="2.800"/>
<rect x="64.500" y="803" width="78" height="20" fill="#fff" fill-opacity=".5"/><path d="M64.500,803V823H142.500V803" fill="none" stroke="#777" stroke-width="2.200"/>
<rect x="64.500" y="824" width="126.500" height="21" fill="#fff" fill-opacity=".5"/><path d="M64.500,845V824H191V845" fill="none" stroke="#777" stroke-width="2.200"/>
<text x="71.500" y="819" font-family='"Liberation Sans", sans-serif' font-size="14.600" fill="#333">30 km</text><text x="71.500" y="840.500" font-family='"Liberation Sans", sans-serif' font-size="14.600" fill="#333">30 mi</text>
<rect x="653.500" y="830" width="384" height="22" fill="#fff" fill-opacity=".72"/>
<text y="846" font-family='"Liberation Sans", sans-serif' font-size="14.600" letter-spacing=".04"><tspan x="659.500" fill="#0078a8">Map data</tspan><tspan fill="#0078a8">: National Geographic, Esri,...</tspan><tspan fill="#333" xml:space="preserve"> | Powered by </tspan><tspan fill="#0078a8">Esri</tspan></text>
</g></svg>

<!-- texts -->
<span class="t" style="left:48.0px;top:7.2px;font-size:24px;font-weight:700;color:#fff;letter-spacing:1.007px;font-family:'Liberation Sans', sans-serif;text-shadow:0 0 1px #8a8a8a,1px 0 1px #9a9a9a,-1px 0 1px #9a9a9a,0 1px 1px #8f8f8f,0 -1px 1px #a5a5a5;">4.8 magnitude earthquake near Dörtyol, Hatay, Turkey and Adana, Turkey : March 05, 2023 20:49 — Mozilla Firefox</span>
<span class="t" style="left:10.0px;top:45.6px;font-size:20.5px;font-weight:400;color:#fff;letter-spacing:0.151px;font-family:'Liberation Sans', sans-serif;">File</span>
<span class="t" style="left:64.0px;top:45.6px;font-size:20.5px;font-weight:400;color:#fff;letter-spacing:0.724px;font-family:'Liberation Sans', sans-serif;">Edit</span>
<span class="t" style="left:121.0px;top:45.6px;font-size:20.5px;font-weight:400;color:#fff;letter-spacing:1.141px;font-family:'Liberation Sans', sans-serif;">View</span>
<span class="t" style="left:188.5px;top:45.6px;font-size:20.5px;font-weight:400;color:#fff;letter-spacing:0.867px;font-family:'Liberation Sans', sans-serif;">History</span>
<span class="t" style="left:278.0px;top:45.6px;font-size:20.5px;font-weight:400;color:#fff;letter-spacing:0.559px;font-family:'Liberation Sans', sans-serif;">Bookmarks</span>
<span class="t" style="left:404.0px;top:45.6px;font-size:20.5px;font-weight:400;color:#fff;letter-spacing:0.785px;font-family:'Liberation Sans', sans-serif;">Tools</span>
<span class="t" style="left:476.0px;top:45.6px;font-size:20.5px;font-weight:400;color:#fff;letter-spacing:0.609px;font-family:'Liberation Sans', sans-serif;">Help</span>
<span class="t" style="left:77.0px;top:94.7px;font-size:21px;font-weight:400;color:#fff;letter-spacing:-0.100px;font-family:'Liberation Sans', sans-serif;-webkit-mask-image:linear-gradient(90deg,#000 70%,transparent 100%);mask-image:linear-gradient(90deg,#000 70%,transparent 100%);">Roj Bash Kurdista</span>
<span class="t" style="left:302.0px;top:94.7px;font-size:21px;font-weight:400;color:#15141a;letter-spacing:0.214px;font-family:'Liberation Sans', sans-serif;-webkit-mask-image:linear-gradient(90deg,#000 78%,transparent 100%);mask-image:linear-gradient(90deg,#000 78%,transparent 100%);">4.8 magnitude ea</span>
<span class="t" style="left:330.0px;top:144.8px;font-size:21.5px;font-weight:400;color:#1c5a34;letter-spacing:1.219px;font-family:'Liberation Sans', sans-serif;">https</span>
<span class="t" style="left:382.5px;top:144.8px;font-size:21.5px;font-weight:400;color:#1c5a34;letter-spacing:2.289px;font-family:'Liberation Sans', sans-serif;">://</span>
<span class="t" style="left:406.0px;top:144.8px;font-size:21.5px;font-weight:400;color:#15141a;letter-spacing:1.069px;font-family:'Liberation Sans', sans-serif;">earthquaketrack.com</span>
<span class="t" style="left:626.0px;top:144.8px;font-size:21.5px;font-weight:400;color:#1c5a34;letter-spacing:0.348px;font-family:'Liberation Sans', sans-serif;">/quakes/2023-03-05-20-49-46-utc-4-8-10</span>
<span class="t" style="left:1172.5px;top:145.8px;font-size:18.5px;font-weight:400;color:#fff;letter-spacing:-0.776px;font-family:'Liberation Sans', sans-serif;">133%</span>
<span class="t" style="left:33.0px;top:181.7px;font-size:21px;font-weight:400;color:#fff;letter-spacing:0.496px;font-family:'Liberation Sans', sans-serif;">Import bookmarks…</span>
<span class="t" style="left:264.0px;top:181.7px;font-size:21px;font-weight:400;color:#fff;letter-spacing:0.956px;font-family:'Liberation Sans', sans-serif;">Voltex</span>
<span class="t" style="left:358.5px;top:181.7px;font-size:21px;font-weight:400;color:#fff;letter-spacing:0.578px;font-family:'Liberation Sans', sans-serif;">Macron faces off with t…</span>
<span class="t" style="left:640.0px;top:181.7px;font-size:21px;font-weight:400;color:#fff;letter-spacing:-0.074px;font-family:'Liberation Sans', sans-serif;">Building a USB-C touch…</span>
<span class="t" style="left:921.5px;top:181.7px;font-size:21px;font-weight:400;color:#fff;letter-spacing:-0.086px;font-family:'Liberation Sans', sans-serif;">Roj Bash Kurdistan • Po…</span>
<span class="t" style="left:1418.5px;top:181.7px;font-size:21px;font-weight:400;color:#fff;letter-spacing:0.401px;font-family:'Liberation Sans', sans-serif;">Other Bookmarks</span>
<span class="t" style="left:33.0px;top:865.4px;font-size:22px;font-weight:400;color:#1d1d1d;letter-spacing:-0.349px;font-family:'Liberation Sans', sans-serif;">Menu</span>
<span class="t" style="left:291.0px;top:865.4px;font-size:22px;font-weight:400;color:#1d1d1d;letter-spacing:-0.103px;font-family:'Liberation Sans', sans-serif;">4.8 magnitude earthqu…</span>
<span class="t" style="left:1424.0px;top:865.4px;font-size:22px;font-weight:400;color:#1d1d1d;letter-spacing:-0.398px;font-family:'Liberation Sans', sans-serif;">Mon</span>
<span class="t" style="left:1478.0px;top:865.4px;font-size:22px;font-weight:400;color:#1d1d1d;letter-spacing:-0.756px;font-family:'Liberation Sans', sans-serif;">6 Mar, 04:20</span>
<span class="t" style="left:1479.0px;top:866.6px;font-size:14px;font-weight:700;color:#d9d9a4;letter-spacing:-1.524px;font-family:'Liberation Sans', sans-serif;opacity:.55;text-shadow:1px 1.5px 2px #222,0 0 2px #333;">Roj Bash Kurdistan</span>
<span class="t" style="left:1090.0px;top:235.2px;font-size:21px;font-weight:400;color:#0d6efd;letter-spacing:-0.979px;font-family:'Liberation Sans', sans-serif;text-decoration:underline;text-decoration-thickness:1.5px;text-underline-offset:2px;">7 hours ago </span>
<span class="t" style="left:1196.0px;top:235.2px;font-size:21px;font-weight:400;color:#d4a017;letter-spacing:-0.801px;font-family:'Liberation Sans', sans-serif;">4.8 magnitude</span>
<span class="t" style="left:1319.5px;top:235.2px;font-size:21px;font-weight:400;color:#212529;letter-spacing:-0.646px;font-family:'Liberation Sans', sans-serif;">, 10 km depth</span>
<span class="t" style="left:1069.5px;top:263.2px;font-size:21px;font-weight:400;color:#0d6efd;letter-spacing:-0.172px;font-family:'Liberation Sans', sans-serif;text-decoration:underline;text-decoration-thickness:1.5px;text-underline-offset:2px;">Dörtyol</span>
<span class="t" style="left:1135.0px;top:263.2px;font-size:21px;font-weight:400;color:#212529;letter-spacing:-1.672px;font-family:'Liberation Sans', sans-serif;">, </span>
<span class="t" style="left:1145.0px;top:263.2px;font-size:21px;font-weight:400;color:#0d6efd;letter-spacing:-1.215px;font-family:'Liberation Sans', sans-serif;text-decoration:underline;text-decoration-thickness:1.5px;text-underline-offset:2px;">Hatay</span>
<span class="t" style="left:1195.0px;top:263.2px;font-size:21px;font-weight:400;color:#212529;letter-spacing:-2.172px;font-family:'Liberation Sans', sans-serif;">, </span>
<span class="t" style="left:1204.5px;top:263.2px;font-size:21px;font-weight:400;color:#0d6efd;letter-spacing:-0.981px;font-family:'Liberation Sans', sans-serif;text-decoration:underline;text-decoration-thickness:1.5px;text-underline-offset:2px;">Turkey</span>
<span class="t" style="left:1069.5px;top:291.7px;font-size:21px;font-weight:700;color:#212529;letter-spacing:-1.080px;font-family:'Liberation Sans', sans-serif;">Aftershocks:</span>
<span class="t" style="left:1090.0px;top:326.2px;font-size:21px;font-weight:400;color:#0d6efd;letter-spacing:-0.979px;font-family:'Liberation Sans', sans-serif;text-decoration:underline;text-decoration-thickness:1.5px;text-underline-offset:2px;">2 hours ago </span>
<span class="t" style="left:1196.0px;top:326.2px;font-size:21px;font-weight:400;color:#d4a017;letter-spacing:-0.801px;font-family:'Liberation Sans', sans-serif;">4.0 magnitude</span>
<span class="t" style="left:1319.5px;top:326.2px;font-size:21px;font-weight:400;color:#212529;letter-spacing:-0.646px;font-family:'Liberation Sans', sans-serif;">, 10 km depth</span>
<span class="t" style="left:1069.5px;top:354.7px;font-size:21px;font-weight:400;color:#0d6efd;letter-spacing:-0.719px;font-family:'Liberation Sans', sans-serif;text-decoration:underline;text-decoration-thickness:1.5px;text-underline-offset:2px;">Toygarlı</span>
<span class="t" style="left:1138.0px;top:354.7px;font-size:21px;font-weight:400;color:#212529;letter-spacing:-1.672px;font-family:'Liberation Sans', sans-serif;">, </span>
<span class="t" style="left:1148.0px;top:354.7px;font-size:21px;font-weight:400;color:#0d6efd;letter-spacing:-1.215px;font-family:'Liberation Sans', sans-serif;text-decoration:underline;text-decoration-thickness:1.5px;text-underline-offset:2px;">Hatay</span>
<span class="t" style="left:1198.0px;top:354.7px;font-size:21px;font-weight:400;color:#212529;letter-spacing:-2.172px;font-family:'Liberation Sans', sans-serif;">, </span>
<span class="t" style="left:1207.5px;top:354.7px;font-size:21px;font-weight:400;color:#0d6efd;letter-spacing:-0.981px;font-family:'Liberation Sans', sans-serif;text-decoration:underline;text-decoration-thickness:1.5px;text-underline-offset:2px;">Turkey</span>
</div>
</body>
</html>
